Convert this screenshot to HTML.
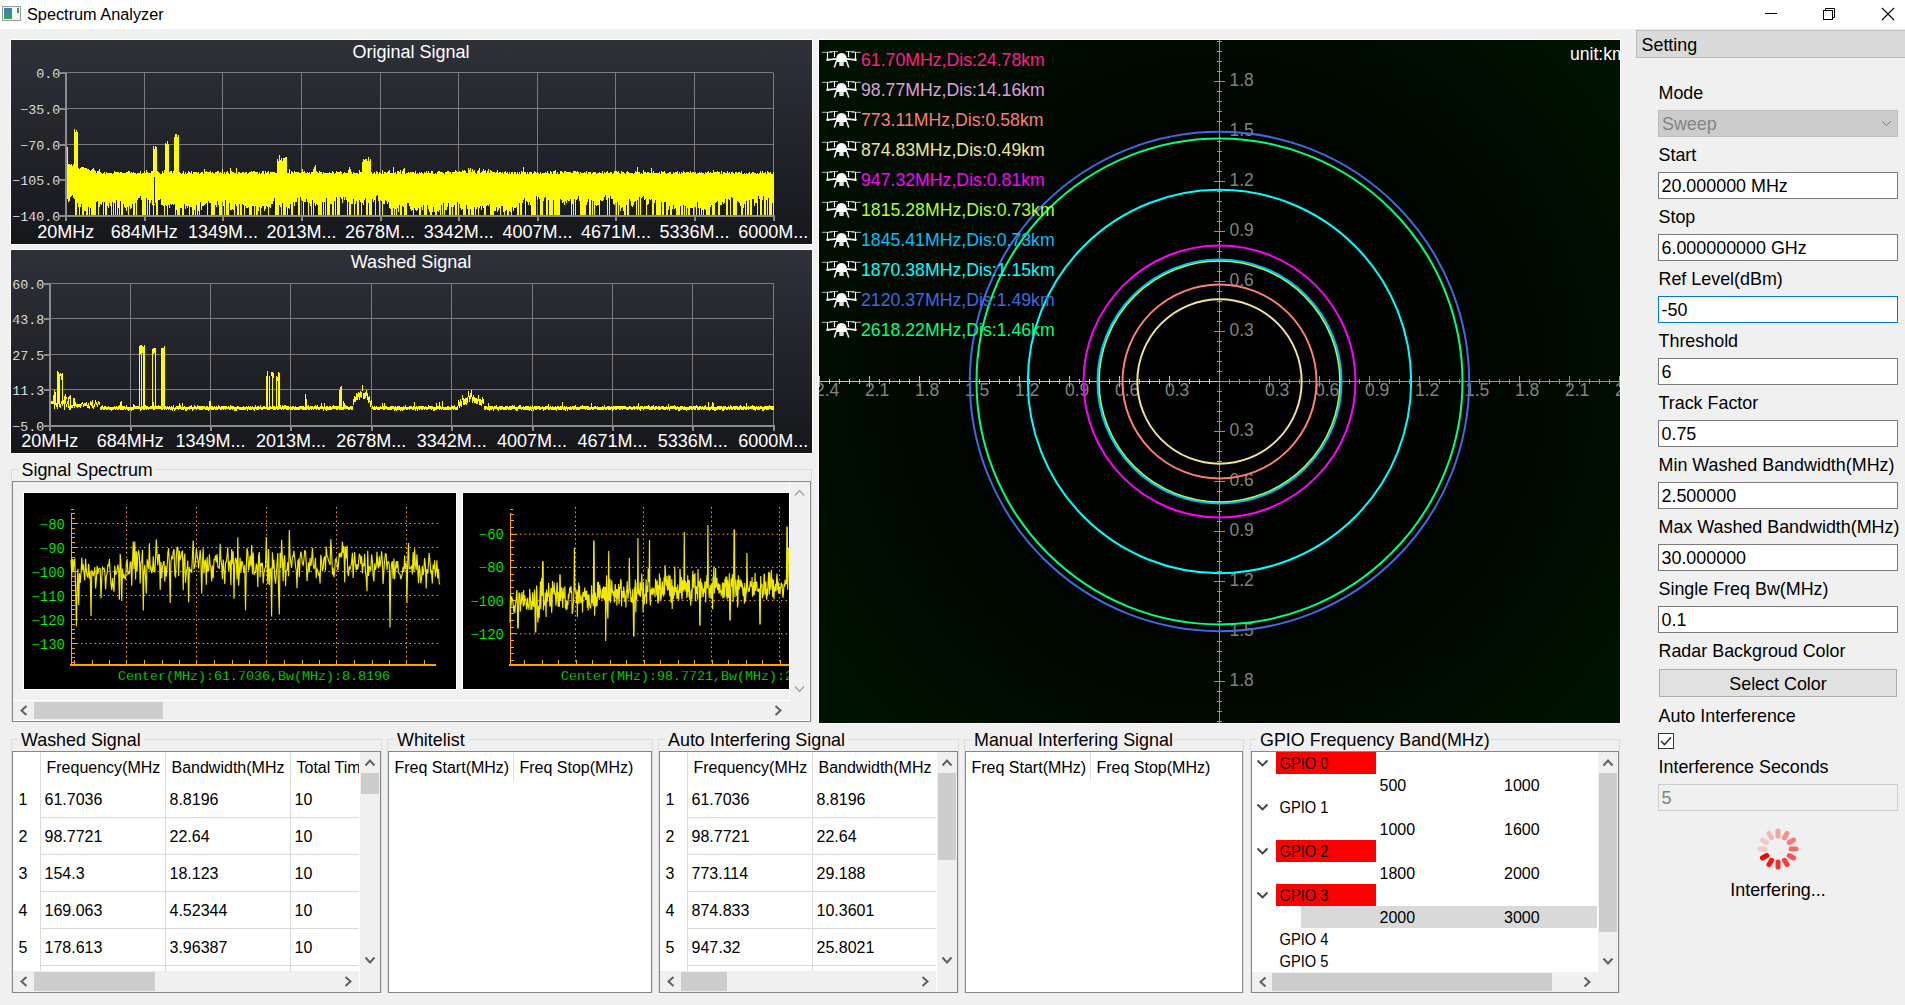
<!DOCTYPE html>
<html><head><meta charset="utf-8"><title>Spectrum Analyzer</title>
<style>html,body{margin:0;padding:0;width:1905px;height:1005px;overflow:hidden;background:#f0f0f0;font-family:"Liberation Sans",sans-serif;}
svg text{white-space:pre}</style></head>
<body><svg width="1905" height="1005" viewBox="0 0 1905 1005" style="position:absolute;left:0;top:0;display:block"><defs><linearGradient id="chg" x1="0" y1="0" x2="0" y2="1"><stop offset="0" stop-color="#2f3139"/><stop offset="1" stop-color="#16171b"/></linearGradient><radialGradient id="rdg" cx="1219.5" cy="381.5" r="480" gradientUnits="userSpaceOnUse"><stop offset="0" stop-color="#000000"/><stop offset="0.45" stop-color="#000300"/><stop offset="1" stop-color="#001200"/></radialGradient><symbol id="drone" viewBox="0 0 40 20" overflow="visible">
<g fill="none" stroke="#b8ccd4" stroke-width="0.9">
<line x1="0" y1="2.3" x2="10.5" y2="2.3"/><line x1="7.5" y1="1.5" x2="16" y2="1.5"/>
<line x1="24" y1="1.5" x2="32.5" y2="1.5"/><line x1="29.5" y1="2.3" x2="39" y2="2.3"/>
</g>
<g fill="none" stroke="#f4f8f8" stroke-width="1.1">
<line x1="5.5" y1="2" x2="5.5" y2="9.5"/><line x1="12.5" y1="1" x2="12.5" y2="7"/>
<line x1="26.5" y1="1" x2="26.5" y2="7"/><line x1="33.5" y1="2" x2="33.5" y2="9.5"/>
<path d="M5.5 9.8 Q10 9.3 14.5 8.8" stroke-width="1.7"/><path d="M33.5 9.8 Q29 9.3 24.5 8.8" stroke-width="1.7"/>
<path d="M14.5 11 L12.3 17.5" stroke-width="1.5"/><path d="M24.5 11 L26.7 17.5" stroke-width="1.5"/>
</g>
<path d="M14 10.5 Q14 3 19.5 3 Q25 3 25 10.5 L24 12 L15 12 Z" fill="#ffffff"/>
<rect x="4.3" y="8.5" width="2.6" height="2.6" rx="1" fill="#fff"/><rect x="32.1" y="8.5" width="2.6" height="2.6" rx="1" fill="#fff"/>
<rect x="17.3" y="12" width="4.4" height="4" fill="#d8e4e4"/>
</symbol></defs><rect x="0" y="0" width="1905" height="29" fill="#ffffff" />
<rect x="2" y="6" width="19" height="15" fill="#f4f4f4" />
<rect x="2" y="6" width="19" height="1" fill="#9a9a9a" />
<rect x="2" y="20" width="19" height="1" fill="#9a9a9a" />
<rect x="2" y="6" width="1" height="15" fill="#9a9a9a" />
<rect x="20" y="6" width="1" height="15" fill="#9a9a9a" />
<defs><linearGradient id="icg" x1="0" y1="0" x2="0" y2="1"><stop offset="0" stop-color="#3b7fb0"/><stop offset="1" stop-color="#3aa060"/></linearGradient></defs>
<rect x="4" y="8" width="8" height="11" fill="url(#icg)" />
<rect x="17" y="8" width="2" height="5" fill="#3aa060" />
<text x="27" y="20" font-family="Liberation Sans" font-size="16.3" fill="#000" text-anchor="start" >Spectrum Analyzer</text>
<rect x="1765" y="13" width="12" height="1" fill="#000" />
<path d="M1825.5 10.5 V8.5 H1834.5 V17.5 H1832.5" fill="none" stroke="#000" stroke-width="1"/>
<rect x="1823.5" y="10.5" width="9" height="9" fill="none" stroke="#000" stroke-width="1"/>
<line x1="1882" y1="8" x2="1894" y2="20" stroke="#000" stroke-width="1.1" />
<line x1="1894" y1="8" x2="1882" y2="20" stroke="#000" stroke-width="1.1" />
<rect x="10" y="39" width="803" height="206" fill="#ffffff" />
<rect x="11" y="40" width="801" height="204" fill="url(#chg)" />
<text x="411" y="57.5" font-family="Liberation Sans" font-size="18" fill="#ffffff" text-anchor="middle" >Original Signal</text>
<rect x="65.7" y="72" width="707.5" height="1" fill="#7c7c7c" />
<text x="60.2" y="78" font-family="Liberation Mono" font-size="13.33" fill="#ffffff" text-anchor="end" stroke="#24262e" stroke-width="0.2">0.0</text>
<rect x="59.7" y="72" width="6" height="2" fill="#8a8a8a" />
<rect x="65.7" y="108" width="707.5" height="1" fill="#7c7c7c" />
<text x="60.2" y="114" font-family="Liberation Mono" font-size="13.33" fill="#ffffff" text-anchor="end" stroke="#24262e" stroke-width="0.2">−35.0</text>
<rect x="59.7" y="108" width="6" height="2" fill="#8a8a8a" />
<rect x="65.7" y="144" width="707.5" height="1" fill="#7c7c7c" />
<text x="60.2" y="150" font-family="Liberation Mono" font-size="13.33" fill="#ffffff" text-anchor="end" stroke="#24262e" stroke-width="0.2">−70.0</text>
<rect x="59.7" y="144" width="6" height="2" fill="#8a8a8a" />
<rect x="65.7" y="179" width="707.5" height="1" fill="#7c7c7c" />
<text x="60.2" y="185" font-family="Liberation Mono" font-size="13.33" fill="#ffffff" text-anchor="end" stroke="#24262e" stroke-width="0.2">−105.0</text>
<rect x="59.7" y="179" width="6" height="2" fill="#8a8a8a" />
<text x="60.2" y="221" font-family="Liberation Mono" font-size="13.33" fill="#ffffff" text-anchor="end" stroke="#24262e" stroke-width="0.2">−140.0</text>
<rect x="59.7" y="215" width="6" height="2" fill="#8a8a8a" />
<rect x="65" y="73" width="1" height="142.5" fill="#7c7c7c" />
<rect x="65" y="215" width="2" height="6" fill="#8a8a8a" />
<rect x="144" y="73" width="1" height="142.5" fill="#7c7c7c" />
<rect x="144" y="215" width="2" height="6" fill="#8a8a8a" />
<rect x="222" y="73" width="1" height="142.5" fill="#7c7c7c" />
<rect x="222" y="215" width="2" height="6" fill="#8a8a8a" />
<rect x="301" y="73" width="1" height="142.5" fill="#7c7c7c" />
<rect x="301" y="215" width="2" height="6" fill="#8a8a8a" />
<rect x="380" y="73" width="1" height="142.5" fill="#7c7c7c" />
<rect x="380" y="215" width="2" height="6" fill="#8a8a8a" />
<rect x="458" y="73" width="1" height="142.5" fill="#7c7c7c" />
<rect x="458" y="215" width="2" height="6" fill="#8a8a8a" />
<rect x="537" y="73" width="1" height="142.5" fill="#7c7c7c" />
<rect x="537" y="215" width="2" height="6" fill="#8a8a8a" />
<rect x="615" y="73" width="1" height="142.5" fill="#7c7c7c" />
<rect x="615" y="215" width="2" height="6" fill="#8a8a8a" />
<rect x="694" y="73" width="1" height="142.5" fill="#7c7c7c" />
<rect x="694" y="215" width="2" height="6" fill="#8a8a8a" />
<rect x="773" y="73" width="1" height="142.5" fill="#7c7c7c" />
<rect x="773" y="215" width="2" height="6" fill="#8a8a8a" />
<clipPath id="c1"><rect x="65.7" y="33" width="709.5" height="182.5"/></clipPath>
<path clip-path="url(#c1)" d="M66 147h1V216h-1ZM67 147h1V199h-1ZM68 164h1V202h-1ZM69 164h1V201h-1ZM70 165h1V197h-1ZM71 164h1V196h-1ZM72 166h1V195h-1ZM73 164h1V198h-1ZM74 129h1V199h-1ZM75 132h1V216h-1ZM76 130h1V216h-1ZM77 132h1V203h-1ZM78 168h1V207h-1ZM79 169h1V216h-1ZM80 168h1V207h-1ZM81 167h1V204h-1ZM82 167h1V216h-1ZM83 167h1V216h-1ZM84 168h1V211h-1ZM85 168h1V211h-1ZM86 168h1V216h-1ZM87 169h1V216h-1ZM88 169h1V207h-1ZM89 170h1V216h-1ZM90 171h1V208h-1ZM91 170h1V216h-1ZM92 169h1V216h-1ZM93 168h1V216h-1ZM94 170h1V216h-1ZM95 171h1V216h-1ZM96 173h1V202h-1ZM97 171h1V201h-1ZM98 171h1V216h-1ZM99 169h1V207h-1ZM100 172h1V204h-1ZM101 173h1V205h-1ZM102 174h1V202h-1ZM103 173h1V216h-1ZM104 172h1V202h-1ZM105 174h1V216h-1ZM106 172h1V216h-1ZM107 173h1V206h-1ZM108 173h1V208h-1ZM109 173h1V203h-1ZM110 173h1V206h-1ZM111 173h1V216h-1ZM112 174h1V202h-1ZM113 173h1V216h-1ZM114 171h1V203h-1ZM115 172h1V216h-1ZM116 172h1V200h-1ZM117 172h1V216h-1ZM118 172h1V208h-1ZM119 173h1V216h-1ZM120 172h1V201h-1ZM121 172h1V216h-1ZM122 173h1V216h-1ZM123 173h1V204h-1ZM124 173h1V207h-1ZM125 173h1V208h-1ZM126 172h1V211h-1ZM127 172h1V207h-1ZM128 171h1V216h-1ZM129 171h1V206h-1ZM130 173h1V209h-1ZM131 172h1V208h-1ZM132 173h1V204h-1ZM133 172h1V216h-1ZM134 173h1V216h-1ZM135 173h1V203h-1ZM136 174h1V216h-1ZM137 173h1V200h-1ZM138 173h1V198h-1ZM139 173h1V198h-1ZM140 171h1V196h-1ZM141 174h1V200h-1ZM142 173h1V216h-1ZM143 173h1V216h-1ZM144 171h1V216h-1ZM145 173h1V216h-1ZM146 170h1V198h-1ZM147 172h1V216h-1ZM148 173h1V200h-1ZM149 173h1V216h-1ZM150 173h1V203h-1ZM151 171h1V200h-1ZM152 171h1V205h-1ZM153 146h1V216h-1ZM154 149h1V205h-1ZM155 146h1V203h-1ZM156 147h1V216h-1ZM157 171h1V216h-1ZM158 172h1V200h-1ZM159 173h1V200h-1ZM160 174h1V199h-1ZM161 174h1V205h-1ZM162 171h1V205h-1ZM163 173h1V206h-1ZM164 170h1V216h-1ZM165 143h1V205h-1ZM166 144h1V206h-1ZM167 141h1V216h-1ZM168 144h1V205h-1ZM169 172h1V208h-1ZM170 171h1V204h-1ZM171 171h1V205h-1ZM172 173h1V204h-1ZM173 171h1V205h-1ZM174 137h1V204h-1ZM175 134h1V216h-1ZM176 134h1V210h-1ZM177 137h1V216h-1ZM178 135h1V216h-1ZM179 172h1V216h-1ZM180 173h1V208h-1ZM181 174h1V208h-1ZM182 173h1V216h-1ZM183 171h1V216h-1ZM184 174h1V204h-1ZM185 172h1V209h-1ZM186 174h1V206h-1ZM187 173h1V208h-1ZM188 171h1V206h-1ZM189 172h1V216h-1ZM190 173h1V207h-1ZM191 171h1V207h-1ZM192 174h1V216h-1ZM193 172h1V216h-1ZM194 172h1V210h-1ZM195 172h1V216h-1ZM196 172h1V205h-1ZM197 173h1V216h-1ZM198 172h1V211h-1ZM199 174h1V216h-1ZM200 173h1V202h-1ZM201 172h1V210h-1ZM202 172h1V206h-1ZM203 174h1V206h-1ZM204 169h1V205h-1ZM205 172h1V204h-1ZM206 171h1V203h-1ZM207 172h1V216h-1ZM208 172h1V201h-1ZM209 172h1V203h-1ZM210 171h1V203h-1ZM211 173h1V216h-1ZM212 172h1V216h-1ZM213 173h1V216h-1ZM214 174h1V216h-1ZM215 172h1V205h-1ZM216 172h1V207h-1ZM217 171h1V201h-1ZM218 171h1V205h-1ZM219 173h1V216h-1ZM220 172h1V216h-1ZM221 173h1V216h-1ZM222 169h1V202h-1ZM223 174h1V206h-1ZM224 172h1V216h-1ZM225 174h1V200h-1ZM226 172h1V216h-1ZM227 171h1V216h-1ZM228 173h1V216h-1ZM229 174h1V203h-1ZM230 168h1V210h-1ZM231 171h1V210h-1ZM232 172h1V209h-1ZM233 172h1V210h-1ZM234 173h1V216h-1ZM235 173h1V204h-1ZM236 168h1V206h-1ZM237 174h1V216h-1ZM238 172h1V216h-1ZM239 172h1V204h-1ZM240 173h1V216h-1ZM241 173h1V216h-1ZM242 172h1V204h-1ZM243 172h1V205h-1ZM244 173h1V216h-1ZM245 172h1V206h-1ZM246 172h1V208h-1ZM247 174h1V208h-1ZM248 173h1V207h-1ZM249 172h1V216h-1ZM250 172h1V216h-1ZM251 171h1V216h-1ZM252 172h1V206h-1ZM253 171h1V206h-1ZM254 171h1V216h-1ZM255 172h1V206h-1ZM256 172h1V216h-1ZM257 172h1V216h-1ZM258 174h1V211h-1ZM259 172h1V207h-1ZM260 174h1V216h-1ZM261 173h1V208h-1ZM262 171h1V206h-1ZM263 171h1V206h-1ZM264 174h1V211h-1ZM265 171h1V209h-1ZM266 173h1V206h-1ZM267 172h1V207h-1ZM268 171h1V216h-1ZM269 174h1V207h-1ZM270 172h1V208h-1ZM271 172h1V204h-1ZM272 172h1V204h-1ZM273 172h1V201h-1ZM274 172h1V198h-1ZM275 173h1V216h-1ZM276 173h1V216h-1ZM277 159h1V216h-1ZM278 161h1V216h-1ZM279 155h1V205h-1ZM280 160h1V207h-1ZM281 158h1V216h-1ZM282 161h1V203h-1ZM283 158h1V216h-1ZM284 158h1V216h-1ZM285 157h1V216h-1ZM286 157h1V207h-1ZM287 173h1V216h-1ZM288 173h1V208h-1ZM289 169h1V209h-1ZM290 174h1V204h-1ZM291 171h1V216h-1ZM292 172h1V216h-1ZM293 173h1V202h-1ZM294 171h1V206h-1ZM295 172h1V202h-1ZM296 172h1V202h-1ZM297 172h1V198h-1ZM298 172h1V216h-1ZM299 173h1V216h-1ZM300 173h1V197h-1ZM301 172h1V200h-1ZM302 169h1V201h-1ZM303 172h1V216h-1ZM304 171h1V202h-1ZM305 173h1V202h-1ZM306 173h1V199h-1ZM307 172h1V202h-1ZM308 173h1V216h-1ZM309 172h1V203h-1ZM310 174h1V206h-1ZM311 172h1V216h-1ZM312 172h1V200h-1ZM313 169h1V216h-1ZM314 167h1V203h-1ZM315 165h1V206h-1ZM316 171h1V204h-1ZM317 172h1V205h-1ZM318 173h1V216h-1ZM319 171h1V216h-1ZM320 172h1V216h-1ZM321 172h1V216h-1ZM322 174h1V202h-1ZM323 172h1V216h-1ZM324 173h1V202h-1ZM325 173h1V216h-1ZM326 173h1V198h-1ZM327 173h1V216h-1ZM328 173h1V216h-1ZM329 172h1V216h-1ZM330 173h1V204h-1ZM331 173h1V204h-1ZM332 171h1V216h-1ZM333 172h1V216h-1ZM334 174h1V201h-1ZM335 173h1V216h-1ZM336 171h1V197h-1ZM337 172h1V216h-1ZM338 172h1V216h-1ZM339 172h1V216h-1ZM340 171h1V197h-1ZM341 172h1V199h-1ZM342 174h1V203h-1ZM343 173h1V197h-1ZM344 172h1V200h-1ZM345 173h1V197h-1ZM346 173h1V200h-1ZM347 173h1V216h-1ZM348 170h1V202h-1ZM349 167h1V216h-1ZM350 169h1V216h-1ZM351 172h1V204h-1ZM352 174h1V204h-1ZM353 172h1V199h-1ZM354 173h1V216h-1ZM355 173h1V204h-1ZM356 173h1V201h-1ZM357 173h1V216h-1ZM358 174h1V216h-1ZM359 170h1V200h-1ZM360 172h1V202h-1ZM361 172h1V216h-1ZM362 162h1V203h-1ZM363 159h1V205h-1ZM364 160h1V200h-1ZM365 159h1V198h-1ZM366 159h1V216h-1ZM367 161h1V216h-1ZM368 157h1V203h-1ZM369 161h1V216h-1ZM370 159h1V216h-1ZM371 172h1V216h-1ZM372 174h1V199h-1ZM373 173h1V202h-1ZM374 172h1V200h-1ZM375 174h1V216h-1ZM376 171h1V196h-1ZM377 172h1V195h-1ZM378 174h1V201h-1ZM379 172h1V216h-1ZM380 173h1V200h-1ZM381 174h1V201h-1ZM382 170h1V216h-1ZM383 174h1V204h-1ZM384 172h1V204h-1ZM385 172h1V200h-1ZM386 173h1V201h-1ZM387 172h1V204h-1ZM388 171h1V202h-1ZM389 170h1V208h-1ZM390 173h1V209h-1ZM391 173h1V216h-1ZM392 173h1V216h-1ZM393 167h1V208h-1ZM394 173h1V216h-1ZM395 172h1V209h-1ZM396 174h1V216h-1ZM397 171h1V208h-1ZM398 171h1V212h-1ZM399 172h1V205h-1ZM400 170h1V216h-1ZM401 174h1V216h-1ZM402 171h1V206h-1ZM403 169h1V207h-1ZM404 168h1V216h-1ZM405 174h1V216h-1ZM406 173h1V216h-1ZM407 173h1V203h-1ZM408 172h1V203h-1ZM409 173h1V206h-1ZM410 172h1V209h-1ZM411 172h1V211h-1ZM412 172h1V210h-1ZM413 172h1V216h-1ZM414 173h1V208h-1ZM415 171h1V210h-1ZM416 174h1V211h-1ZM417 173h1V210h-1ZM418 174h1V208h-1ZM419 172h1V216h-1ZM420 173h1V216h-1ZM421 172h1V207h-1ZM422 173h1V210h-1ZM423 174h1V205h-1ZM424 172h1V216h-1ZM425 173h1V216h-1ZM426 171h1V216h-1ZM427 173h1V205h-1ZM428 171h1V209h-1ZM429 173h1V212h-1ZM430 173h1V216h-1ZM431 171h1V216h-1ZM432 171h1V212h-1ZM433 174h1V207h-1ZM434 174h1V212h-1ZM435 173h1V216h-1ZM436 174h1V216h-1ZM437 172h1V211h-1ZM438 171h1V212h-1ZM439 171h1V210h-1ZM440 172h1V216h-1ZM441 172h1V205h-1ZM442 172h1V216h-1ZM443 173h1V203h-1ZM444 174h1V216h-1ZM445 172h1V210h-1ZM446 172h1V210h-1ZM447 171h1V207h-1ZM448 171h1V203h-1ZM449 172h1V216h-1ZM450 172h1V216h-1ZM451 174h1V207h-1ZM452 172h1V216h-1ZM453 172h1V207h-1ZM454 172h1V205h-1ZM455 170h1V216h-1ZM456 171h1V216h-1ZM457 172h1V202h-1ZM458 172h1V216h-1ZM459 171h1V204h-1ZM460 172h1V208h-1ZM461 172h1V210h-1ZM462 170h1V209h-1ZM463 171h1V216h-1ZM464 170h1V216h-1ZM465 171h1V216h-1ZM466 173h1V205h-1ZM467 173h1V209h-1ZM468 168h1V216h-1ZM469 170h1V216h-1ZM470 168h1V209h-1ZM471 172h1V216h-1ZM472 169h1V216h-1ZM473 171h1V216h-1ZM474 170h1V207h-1ZM475 173h1V216h-1ZM476 174h1V209h-1ZM477 171h1V207h-1ZM478 170h1V216h-1ZM479 168h1V208h-1ZM480 173h1V206h-1ZM481 172h1V210h-1ZM482 171h1V206h-1ZM483 169h1V208h-1ZM484 171h1V216h-1ZM485 170h1V216h-1ZM486 173h1V206h-1ZM487 171h1V205h-1ZM488 169h1V206h-1ZM489 173h1V204h-1ZM490 170h1V216h-1ZM491 171h1V216h-1ZM492 172h1V216h-1ZM493 172h1V216h-1ZM494 172h1V211h-1ZM495 173h1V211h-1ZM496 172h1V207h-1ZM497 170h1V212h-1ZM498 173h1V210h-1ZM499 172h1V208h-1ZM500 172h1V216h-1ZM501 173h1V206h-1ZM502 172h1V206h-1ZM503 174h1V212h-1ZM504 172h1V216h-1ZM505 171h1V211h-1ZM506 173h1V210h-1ZM507 172h1V216h-1ZM508 174h1V216h-1ZM509 172h1V211h-1ZM510 174h1V212h-1ZM511 172h1V216h-1ZM512 172h1V207h-1ZM513 174h1V211h-1ZM514 172h1V208h-1ZM515 172h1V208h-1ZM516 174h1V207h-1ZM517 172h1V216h-1ZM518 174h1V216h-1ZM519 172h1V203h-1ZM520 174h1V216h-1ZM521 171h1V216h-1ZM522 172h1V203h-1ZM523 167h1V200h-1ZM524 172h1V198h-1ZM525 172h1V216h-1ZM526 174h1V201h-1ZM527 172h1V202h-1ZM528 174h1V205h-1ZM529 172h1V202h-1ZM530 172h1V205h-1ZM531 172h1V216h-1ZM532 174h1V216h-1ZM533 173h1V216h-1ZM534 171h1V216h-1ZM535 172h1V216h-1ZM536 173h1V196h-1ZM537 172h1V200h-1ZM538 173h1V197h-1ZM539 174h1V199h-1ZM540 172h1V216h-1ZM541 174h1V216h-1ZM542 173h1V216h-1ZM543 173h1V201h-1ZM544 173h1V198h-1ZM545 172h1V197h-1ZM546 173h1V216h-1ZM547 171h1V216h-1ZM548 173h1V200h-1ZM549 174h1V216h-1ZM550 171h1V216h-1ZM551 172h1V216h-1ZM552 174h1V216h-1ZM553 171h1V200h-1ZM554 171h1V216h-1ZM555 170h1V216h-1ZM556 174h1V216h-1ZM557 172h1V216h-1ZM558 174h1V216h-1ZM559 174h1V216h-1ZM560 171h1V199h-1ZM561 171h1V200h-1ZM562 172h1V203h-1ZM563 173h1V202h-1ZM564 171h1V205h-1ZM565 171h1V201h-1ZM566 172h1V203h-1ZM567 172h1V200h-1ZM568 172h1V201h-1ZM569 172h1V201h-1ZM570 172h1V199h-1ZM571 173h1V216h-1ZM572 173h1V204h-1ZM573 171h1V216h-1ZM574 171h1V199h-1ZM575 171h1V216h-1ZM576 172h1V200h-1ZM577 171h1V199h-1ZM578 172h1V196h-1ZM579 174h1V201h-1ZM580 172h1V216h-1ZM581 173h1V216h-1ZM582 173h1V216h-1ZM583 173h1V216h-1ZM584 172h1V216h-1ZM585 173h1V216h-1ZM586 171h1V205h-1ZM587 174h1V202h-1ZM588 172h1V199h-1ZM589 172h1V216h-1ZM590 172h1V216h-1ZM591 174h1V200h-1ZM592 173h1V216h-1ZM593 172h1V201h-1ZM594 172h1V216h-1ZM595 172h1V205h-1ZM596 174h1V206h-1ZM597 173h1V205h-1ZM598 173h1V205h-1ZM599 172h1V216h-1ZM600 173h1V200h-1ZM601 173h1V201h-1ZM602 171h1V201h-1ZM603 174h1V200h-1ZM604 172h1V197h-1ZM605 173h1V195h-1ZM606 172h1V200h-1ZM607 171h1V216h-1ZM608 173h1V198h-1ZM609 173h1V216h-1ZM610 172h1V196h-1ZM611 172h1V199h-1ZM612 174h1V199h-1ZM613 173h1V204h-1ZM614 171h1V205h-1ZM615 171h1V203h-1ZM616 171h1V216h-1ZM617 172h1V202h-1ZM618 171h1V216h-1ZM619 173h1V205h-1ZM620 174h1V211h-1ZM621 171h1V208h-1ZM622 172h1V207h-1ZM623 172h1V211h-1ZM624 173h1V216h-1ZM625 174h1V216h-1ZM626 172h1V205h-1ZM627 171h1V216h-1ZM628 172h1V216h-1ZM629 173h1V199h-1ZM630 173h1V201h-1ZM631 173h1V206h-1ZM632 173h1V207h-1ZM633 174h1V205h-1ZM634 173h1V202h-1ZM635 171h1V201h-1ZM636 172h1V216h-1ZM637 167h1V200h-1ZM638 172h1V216h-1ZM639 172h1V197h-1ZM640 174h1V216h-1ZM641 173h1V198h-1ZM642 174h1V197h-1ZM643 170h1V196h-1ZM644 172h1V200h-1ZM645 172h1V199h-1ZM646 173h1V216h-1ZM647 172h1V205h-1ZM648 172h1V204h-1ZM649 173h1V199h-1ZM650 173h1V200h-1ZM651 168h1V199h-1ZM652 173h1V216h-1ZM653 171h1V216h-1ZM654 173h1V203h-1ZM655 173h1V200h-1ZM656 173h1V216h-1ZM657 173h1V216h-1ZM658 173h1V216h-1ZM659 172h1V216h-1ZM660 174h1V216h-1ZM661 171h1V202h-1ZM662 172h1V216h-1ZM663 172h1V216h-1ZM664 171h1V202h-1ZM665 173h1V202h-1ZM666 174h1V216h-1ZM667 173h1V216h-1ZM668 173h1V210h-1ZM669 172h1V206h-1ZM670 172h1V216h-1ZM671 174h1V216h-1ZM672 174h1V209h-1ZM673 172h1V205h-1ZM674 173h1V209h-1ZM675 172h1V208h-1ZM676 172h1V216h-1ZM677 171h1V216h-1ZM678 174h1V216h-1ZM679 172h1V216h-1ZM680 174h1V206h-1ZM681 172h1V216h-1ZM682 173h1V216h-1ZM683 171h1V205h-1ZM684 172h1V216h-1ZM685 173h1V206h-1ZM686 172h1V216h-1ZM687 172h1V208h-1ZM688 172h1V216h-1ZM689 173h1V216h-1ZM690 171h1V208h-1ZM691 173h1V208h-1ZM692 172h1V208h-1ZM693 172h1V216h-1ZM694 173h1V207h-1ZM695 172h1V207h-1ZM696 174h1V216h-1ZM697 173h1V202h-1ZM698 173h1V208h-1ZM699 172h1V216h-1ZM700 173h1V208h-1ZM701 172h1V216h-1ZM702 173h1V210h-1ZM703 173h1V216h-1ZM704 174h1V209h-1ZM705 172h1V210h-1ZM706 173h1V216h-1ZM707 172h1V216h-1ZM708 171h1V216h-1ZM709 173h1V216h-1ZM710 172h1V207h-1ZM711 173h1V205h-1ZM712 173h1V216h-1ZM713 170h1V216h-1ZM714 172h1V216h-1ZM715 172h1V203h-1ZM716 172h1V202h-1ZM717 171h1V201h-1ZM718 172h1V216h-1ZM719 172h1V216h-1ZM720 174h1V205h-1ZM721 171h1V205h-1ZM722 174h1V202h-1ZM723 172h1V204h-1ZM724 172h1V203h-1ZM725 173h1V199h-1ZM726 173h1V216h-1ZM727 171h1V216h-1ZM728 173h1V199h-1ZM729 172h1V200h-1ZM730 174h1V216h-1ZM731 172h1V197h-1ZM732 172h1V198h-1ZM733 173h1V216h-1ZM734 174h1V216h-1ZM735 172h1V216h-1ZM736 172h1V216h-1ZM737 173h1V201h-1ZM738 172h1V202h-1ZM739 172h1V203h-1ZM740 173h1V206h-1ZM741 171h1V216h-1ZM742 174h1V216h-1ZM743 174h1V208h-1ZM744 173h1V204h-1ZM745 174h1V216h-1ZM746 173h1V201h-1ZM747 174h1V216h-1ZM748 173h1V216h-1ZM749 172h1V200h-1ZM750 174h1V216h-1ZM751 173h1V216h-1ZM752 172h1V199h-1ZM753 172h1V199h-1ZM754 173h1V206h-1ZM755 173h1V203h-1ZM756 174h1V203h-1ZM757 173h1V216h-1ZM758 174h1V196h-1ZM759 173h1V199h-1ZM760 171h1V216h-1ZM761 173h1V216h-1ZM762 171h1V200h-1ZM763 173h1V196h-1ZM764 173h1V216h-1ZM765 172h1V216h-1ZM766 174h1V200h-1ZM767 171h1V216h-1ZM768 172h1V198h-1ZM769 173h1V216h-1ZM770 172h1V216h-1ZM771 174h1V216h-1ZM772 174h1V203h-1ZM773 172h1V216h-1Z" fill="#ffff00" shape-rendering="crispEdges"/>
<rect x="154" y="177" width="1" height="27" fill="#202229" />
<rect x="65" y="73" width="2" height="144" fill="#8c8c8c" />
<rect x="65" y="215" width="710" height="2" fill="#8c8c8c" />
<text x="65.7" y="237.5" font-family="Liberation Sans" font-size="18" fill="#ffffff" text-anchor="middle" >20MHz</text>
<text x="144.3" y="237.5" font-family="Liberation Sans" font-size="18" fill="#ffffff" text-anchor="middle" >684MHz</text>
<text x="222.9" y="237.5" font-family="Liberation Sans" font-size="18" fill="#ffffff" text-anchor="middle" >1349M...</text>
<text x="301.5" y="237.5" font-family="Liberation Sans" font-size="18" fill="#ffffff" text-anchor="middle" >2013M...</text>
<text x="380.1" y="237.5" font-family="Liberation Sans" font-size="18" fill="#ffffff" text-anchor="middle" >2678M...</text>
<text x="458.8" y="237.5" font-family="Liberation Sans" font-size="18" fill="#ffffff" text-anchor="middle" >3342M...</text>
<text x="537.4" y="237.5" font-family="Liberation Sans" font-size="18" fill="#ffffff" text-anchor="middle" >4007M...</text>
<text x="616.0" y="237.5" font-family="Liberation Sans" font-size="18" fill="#ffffff" text-anchor="middle" >4671M...</text>
<text x="694.6" y="237.5" font-family="Liberation Sans" font-size="18" fill="#ffffff" text-anchor="middle" >5336M...</text>
<text x="773.2" y="237.5" font-family="Liberation Sans" font-size="18" fill="#ffffff" text-anchor="middle" >6000M...</text>
<rect x="10" y="249" width="803" height="205" fill="#ffffff" />
<rect x="11" y="250" width="801" height="203" fill="url(#chg)" />
<text x="411" y="267.5" font-family="Liberation Sans" font-size="18" fill="#ffffff" text-anchor="middle" >Washed Signal</text>
<rect x="49.8" y="283" width="723.4000000000001" height="1" fill="#7c7c7c" />
<text x="44.3" y="289" font-family="Liberation Mono" font-size="13.33" fill="#ffffff" text-anchor="end" stroke="#24262e" stroke-width="0.2">60.0</text>
<rect x="43.8" y="283" width="6" height="2" fill="#8a8a8a" />
<rect x="49.8" y="318" width="723.4000000000001" height="1" fill="#7c7c7c" />
<text x="44.3" y="324" font-family="Liberation Mono" font-size="13.33" fill="#ffffff" text-anchor="end" stroke="#24262e" stroke-width="0.2">43.8</text>
<rect x="43.8" y="318" width="6" height="2" fill="#8a8a8a" />
<rect x="49.8" y="354" width="723.4000000000001" height="1" fill="#7c7c7c" />
<text x="44.3" y="360" font-family="Liberation Mono" font-size="13.33" fill="#ffffff" text-anchor="end" stroke="#24262e" stroke-width="0.2">27.5</text>
<rect x="43.8" y="354" width="6" height="2" fill="#8a8a8a" />
<rect x="49.8" y="389" width="723.4000000000001" height="1" fill="#7c7c7c" />
<text x="44.3" y="395" font-family="Liberation Mono" font-size="13.33" fill="#ffffff" text-anchor="end" stroke="#24262e" stroke-width="0.2">11.3</text>
<rect x="43.8" y="389" width="6" height="2" fill="#8a8a8a" />
<text x="44.3" y="431" font-family="Liberation Mono" font-size="13.33" fill="#ffffff" text-anchor="end" stroke="#24262e" stroke-width="0.2">−5.0</text>
<rect x="43.8" y="425" width="6" height="2" fill="#8a8a8a" />
<rect x="49" y="283.1" width="1" height="142.2" fill="#7c7c7c" />
<rect x="49" y="425" width="2" height="6" fill="#8a8a8a" />
<rect x="130" y="283.1" width="1" height="142.2" fill="#7c7c7c" />
<rect x="130" y="425" width="2" height="6" fill="#8a8a8a" />
<rect x="210" y="283.1" width="1" height="142.2" fill="#7c7c7c" />
<rect x="210" y="425" width="2" height="6" fill="#8a8a8a" />
<rect x="290" y="283.1" width="1" height="142.2" fill="#7c7c7c" />
<rect x="290" y="425" width="2" height="6" fill="#8a8a8a" />
<rect x="371" y="283.1" width="1" height="142.2" fill="#7c7c7c" />
<rect x="371" y="425" width="2" height="6" fill="#8a8a8a" />
<rect x="451" y="283.1" width="1" height="142.2" fill="#7c7c7c" />
<rect x="451" y="425" width="2" height="6" fill="#8a8a8a" />
<rect x="532" y="283.1" width="1" height="142.2" fill="#7c7c7c" />
<rect x="532" y="425" width="2" height="6" fill="#8a8a8a" />
<rect x="612" y="283.1" width="1" height="142.2" fill="#7c7c7c" />
<rect x="612" y="425" width="2" height="6" fill="#8a8a8a" />
<rect x="692" y="283.1" width="1" height="142.2" fill="#7c7c7c" />
<rect x="692" y="425" width="2" height="6" fill="#8a8a8a" />
<rect x="773" y="283.1" width="1" height="142.2" fill="#7c7c7c" />
<rect x="773" y="425" width="2" height="6" fill="#8a8a8a" />
<clipPath id="c2"><rect x="49.8" y="243.10000000000002" width="725.4000000000001" height="182.2"/></clipPath>
<path clip-path="url(#c2)" d="M50 404h1V409h-1ZM51 401h1V404h-1ZM52 401h1V404h-1ZM53 395h1V404h-1ZM54 390h1V409h-1ZM55 392h1V405h-1ZM56 403h1V407h-1ZM57 371h1V409h-1ZM58 372h1V404h-1ZM59 374h1V407h-1ZM60 373h1v3h-1ZM60 404h1V408h-1ZM61 374h1v6h-1ZM61 401h1V404h-1ZM62 373h1V406h-1ZM63 400h1V404h-1ZM64 396h1V410h-1ZM65 394h1V404h-1ZM66 397h1v2h-1ZM66 404h1V407h-1ZM67 401h1V404h-1ZM68 397h1v8h-1ZM68 405h1V408h-1ZM69 396h1v3h-1ZM69 406h1V410h-1ZM70 395h1V410h-1ZM71 405h1V408h-1ZM72 405h1V408h-1ZM73 398h1V406h-1ZM74 398h1v6h-1ZM74 404h1V408h-1ZM75 402h1V406h-1ZM76 404h1V407h-1ZM77 404h1V408h-1ZM78 404h1V407h-1ZM79 404h1V407h-1ZM80 404h1V408h-1ZM81 403h1V406h-1ZM82 402h1V404h-1ZM83 404h1V407h-1ZM84 403h1V406h-1ZM85 403h1V406h-1ZM86 402h1V406h-1ZM87 405h1V408h-1ZM88 403h1V408h-1ZM89 406h1V409h-1ZM90 401h1V405h-1ZM91 402h1V406h-1ZM92 400h1V408h-1ZM93 406h1V409h-1ZM94 404h1V407h-1ZM95 400h1V404h-1ZM96 402h1V405h-1ZM97 404h1V407h-1ZM98 401h1V404h-1ZM99 402h1V405h-1ZM100 407h1V410h-1ZM101 406h1V410h-1ZM102 405h1V409h-1ZM103 407h1V410h-1ZM104 406h1V410h-1ZM105 406h1V409h-1ZM106 407h1V410h-1ZM107 407h1V410h-1ZM108 406h1V409h-1ZM109 407h1V410h-1ZM110 407h1V410h-1ZM111 407h1V411h-1ZM112 407h1V410h-1ZM113 407h1V410h-1ZM114 406h1V409h-1ZM115 407h1V410h-1ZM116 406h1V409h-1ZM117 407h1V410h-1ZM118 406h1V410h-1ZM119 405h1V409h-1ZM120 402h1V410h-1ZM121 401h1V410h-1ZM122 406h1V410h-1ZM123 406h1V410h-1ZM124 406h1V409h-1ZM125 407h1V410h-1ZM126 405h1V409h-1ZM127 407h1V410h-1ZM128 407h1V411h-1ZM129 407h1V410h-1ZM130 407h1V410h-1ZM131 407h1V411h-1ZM132 407h1V410h-1ZM133 404h1V410h-1ZM134 405h1V409h-1ZM135 406h1V409h-1ZM136 406h1V409h-1ZM137 406h1V409h-1ZM138 406h1V409h-1ZM139 346h1V409h-1ZM140 345h1v9h-1ZM140 407h1V411h-1ZM141 345h1V410h-1ZM142 346h1v7h-1ZM142 406h1V409h-1ZM143 347h1V410h-1ZM144 345h1V410h-1ZM145 405h1V409h-1ZM146 406h1V410h-1ZM147 406h1V409h-1ZM148 407h1V410h-1ZM149 407h1V409h-1ZM150 406h1V409h-1ZM151 406h1V409h-1ZM152 349h1V409h-1ZM153 348h1v6h-1ZM153 402h1V410h-1ZM154 348h1v5h-1ZM154 406h1V410h-1ZM155 348h1V409h-1ZM156 406h1V409h-1ZM157 406h1V409h-1ZM158 405h1V409h-1ZM159 406h1V409h-1ZM160 406h1V409h-1ZM161 348h1V410h-1ZM162 348h1V410h-1ZM163 348h1V409h-1ZM164 346h1V410h-1ZM165 406h1V409h-1ZM166 407h1V410h-1ZM167 406h1V409h-1ZM168 407h1V410h-1ZM169 406h1V409h-1ZM170 407h1V410h-1ZM171 406h1V410h-1ZM172 407h1V411h-1ZM173 405h1V409h-1ZM174 408h1V411h-1ZM175 407h1V410h-1ZM176 406h1V409h-1ZM177 406h1V409h-1ZM178 406h1V410h-1ZM179 403h1V409h-1ZM180 405h1V409h-1ZM181 407h1V410h-1ZM182 403h1V410h-1ZM183 407h1V410h-1ZM184 406h1V409h-1ZM185 407h1V411h-1ZM186 407h1V411h-1ZM187 407h1V410h-1ZM188 407h1V409h-1ZM189 406h1V410h-1ZM190 406h1V409h-1ZM191 405h1V409h-1ZM192 407h1V411h-1ZM193 407h1V410h-1ZM194 405h1V409h-1ZM195 406h1V409h-1ZM196 407h1V410h-1ZM197 405h1V409h-1ZM198 406h1V409h-1ZM199 406h1V410h-1ZM200 406h1V410h-1ZM201 406h1V410h-1ZM202 406h1V410h-1ZM203 406h1V409h-1ZM204 406h1V409h-1ZM205 407h1V410h-1ZM206 406h1V410h-1ZM207 406h1V410h-1ZM208 407h1V411h-1ZM209 401h1V410h-1ZM210 401h1V409h-1ZM211 406h1V410h-1ZM212 406h1V410h-1ZM213 407h1V410h-1ZM214 406h1V409h-1ZM215 407h1V410h-1ZM216 406h1V410h-1ZM217 407h1V410h-1ZM218 405h1V409h-1ZM219 406h1V409h-1ZM220 407h1V410h-1ZM221 406h1V410h-1ZM222 406h1V409h-1ZM223 406h1V410h-1ZM224 406h1V409h-1ZM225 406h1V410h-1ZM226 406h1V409h-1ZM227 407h1V409h-1ZM228 406h1V409h-1ZM229 407h1V410h-1ZM230 405h1V410h-1ZM231 406h1V409h-1ZM232 406h1V410h-1ZM233 406h1V409h-1ZM234 407h1V411h-1ZM235 407h1V411h-1ZM236 407h1V411h-1ZM237 406h1V409h-1ZM238 406h1V409h-1ZM239 407h1V410h-1ZM240 407h1V410h-1ZM241 407h1V410h-1ZM242 407h1V410h-1ZM243 406h1V410h-1ZM244 407h1V410h-1ZM245 407h1V410h-1ZM246 406h1V409h-1ZM247 407h1V411h-1ZM248 406h1V409h-1ZM249 407h1V410h-1ZM250 406h1V410h-1ZM251 407h1V410h-1ZM252 406h1V409h-1ZM253 407h1V410h-1ZM254 407h1V411h-1ZM255 405h1V409h-1ZM256 407h1V410h-1ZM257 406h1V410h-1ZM258 406h1V410h-1ZM259 407h1V409h-1ZM260 405h1V409h-1ZM261 407h1V410h-1ZM262 407h1V410h-1ZM263 406h1V409h-1ZM264 406h1V409h-1ZM265 407h1V409h-1ZM266 376h1V409h-1ZM267 371h1V410h-1ZM268 407h1V410h-1ZM269 376h1V410h-1ZM270 406h1V409h-1ZM271 372h1v4h-1ZM271 407h1V409h-1ZM272 372h1V409h-1ZM273 373h1v5h-1ZM273 406h1V410h-1ZM274 406h1V410h-1ZM275 407h1V410h-1ZM276 376h1V409h-1ZM277 377h1v4h-1ZM277 406h1V410h-1ZM278 372h1V410h-1ZM279 373h1V409h-1ZM280 405h1V409h-1ZM281 407h1V410h-1ZM282 405h1V409h-1ZM283 406h1V410h-1ZM284 405h1V409h-1ZM285 405h1V409h-1ZM286 406h1V410h-1ZM287 406h1V410h-1ZM288 406h1V410h-1ZM289 407h1V409h-1ZM290 406h1V410h-1ZM291 407h1V410h-1ZM292 406h1V410h-1ZM293 406h1V409h-1ZM294 407h1V410h-1ZM295 406h1V410h-1ZM296 407h1V410h-1ZM297 407h1V410h-1ZM298 407h1V410h-1ZM299 406h1V410h-1ZM300 406h1V409h-1ZM301 406h1V409h-1ZM302 406h1V410h-1ZM303 406h1V410h-1ZM304 407h1V410h-1ZM305 394h1V410h-1ZM306 399h1V410h-1ZM307 406h1V409h-1ZM308 405h1V410h-1ZM309 407h1V410h-1ZM310 406h1V409h-1ZM311 406h1V410h-1ZM312 406h1V409h-1ZM313 407h1V410h-1ZM314 406h1V409h-1ZM315 405h1V409h-1ZM316 406h1V410h-1ZM317 405h1V409h-1ZM318 407h1V410h-1ZM319 407h1V410h-1ZM320 406h1V409h-1ZM321 403h1V409h-1ZM322 406h1V409h-1ZM323 407h1V411h-1ZM324 403h1V409h-1ZM325 407h1V410h-1ZM326 406h1V411h-1ZM327 406h1V410h-1ZM328 407h1V410h-1ZM329 406h1V410h-1ZM330 406h1V410h-1ZM331 407h1V410h-1ZM332 406h1V409h-1ZM333 405h1V409h-1ZM334 406h1V409h-1ZM335 406h1V409h-1ZM336 406h1V410h-1ZM337 406h1V410h-1ZM338 406h1V409h-1ZM339 390h1V410h-1ZM340 387h1V410h-1ZM341 386h1V410h-1ZM342 407h1V410h-1ZM343 401h1V410h-1ZM344 403h1V409h-1ZM345 405h1V409h-1ZM346 406h1V409h-1ZM347 406h1V409h-1ZM348 407h1V410h-1ZM349 407h1V410h-1ZM350 406h1V409h-1ZM351 406h1V410h-1ZM352 406h1V410h-1ZM353 399h1V405h-1ZM354 396h1V402h-1ZM355 397h1V402h-1ZM356 393h1V400h-1ZM357 394h1V400h-1ZM358 392h1V397h-1ZM359 393h1V400h-1ZM360 391h1V397h-1ZM361 392h1V398h-1ZM362 385h1V391h-1ZM363 393h1V399h-1ZM364 393h1V399h-1ZM365 392h1V398h-1ZM366 390h1V396h-1ZM367 393h1V400h-1ZM368 397h1V403h-1ZM369 396h1V402h-1ZM370 401h1V407h-1ZM371 400h1V405h-1ZM372 406h1V409h-1ZM373 407h1V410h-1ZM374 406h1V410h-1ZM375 407h1V410h-1ZM376 406h1V409h-1ZM377 407h1V410h-1ZM378 407h1V410h-1ZM379 407h1V410h-1ZM380 406h1V409h-1ZM381 407h1V409h-1ZM382 403h1V409h-1ZM383 406h1V410h-1ZM384 403h1V410h-1ZM385 406h1V409h-1ZM386 406h1V409h-1ZM387 407h1V410h-1ZM388 407h1V410h-1ZM389 407h1V410h-1ZM390 406h1V410h-1ZM391 406h1V410h-1ZM392 406h1V409h-1ZM393 406h1V409h-1ZM394 407h1V411h-1ZM395 406h1V410h-1ZM396 407h1V411h-1ZM397 406h1V410h-1ZM398 406h1V410h-1ZM399 406h1V410h-1ZM400 407h1V411h-1ZM401 407h1V410h-1ZM402 407h1V411h-1ZM403 406h1V410h-1ZM404 407h1V410h-1ZM405 405h1V409h-1ZM406 407h1V410h-1ZM407 407h1V410h-1ZM408 407h1V409h-1ZM409 406h1V410h-1ZM410 406h1V409h-1ZM411 406h1V409h-1ZM412 407h1V410h-1ZM413 406h1V410h-1ZM414 402h1V409h-1ZM415 407h1V411h-1ZM416 406h1V409h-1ZM417 407h1V411h-1ZM418 406h1V409h-1ZM419 406h1V410h-1ZM420 406h1V409h-1ZM421 406h1V410h-1ZM422 406h1V410h-1ZM423 406h1V409h-1ZM424 407h1V410h-1ZM425 406h1V409h-1ZM426 407h1V410h-1ZM427 407h1V410h-1ZM428 405h1V409h-1ZM429 406h1V409h-1ZM430 406h1V409h-1ZM431 406h1V410h-1ZM432 406h1V409h-1ZM433 407h1V411h-1ZM434 407h1V411h-1ZM435 407h1V410h-1ZM436 403h1V410h-1ZM437 406h1V409h-1ZM438 406h1V409h-1ZM439 402h1V410h-1ZM440 406h1V409h-1ZM441 407h1V410h-1ZM442 401h1V409h-1ZM443 407h1V410h-1ZM444 407h1V410h-1ZM445 407h1V410h-1ZM446 407h1V410h-1ZM447 406h1V410h-1ZM448 406h1V410h-1ZM449 407h1V410h-1ZM450 407h1V410h-1ZM451 405h1V409h-1ZM452 406h1V409h-1ZM453 406h1V410h-1ZM454 405h1V409h-1ZM455 407h1V410h-1ZM456 407h1V410h-1ZM457 406h1V410h-1ZM458 400h1V406h-1ZM459 402h1V408h-1ZM460 399h1V406h-1ZM461 401h1V407h-1ZM462 395h1V400h-1ZM463 398h1V405h-1ZM464 399h1V405h-1ZM465 398h1V404h-1ZM466 398h1V405h-1ZM467 397h1V403h-1ZM468 391h1V397h-1ZM469 396h1V402h-1ZM470 393h1V399h-1ZM471 390h1V397h-1ZM472 397h1V403h-1ZM473 395h1V401h-1ZM474 397h1V403h-1ZM475 398h1V403h-1ZM476 398h1V404h-1ZM477 399h1V404h-1ZM478 395h1V401h-1ZM479 399h1V405h-1ZM480 399h1V405h-1ZM481 400h1V406h-1ZM482 397h1V403h-1ZM483 399h1V404h-1ZM484 406h1V410h-1ZM485 406h1V410h-1ZM486 406h1V409h-1ZM487 407h1V410h-1ZM488 403h1V410h-1ZM489 406h1V411h-1ZM490 406h1V410h-1ZM491 406h1V410h-1ZM492 406h1V409h-1ZM493 407h1V411h-1ZM494 406h1V409h-1ZM495 406h1V409h-1ZM496 405h1V409h-1ZM497 407h1V410h-1ZM498 407h1V411h-1ZM499 406h1V409h-1ZM500 406h1V410h-1ZM501 406h1V410h-1ZM502 406h1V409h-1ZM503 407h1V410h-1ZM504 407h1V410h-1ZM505 406h1V410h-1ZM506 406h1V410h-1ZM507 406h1V409h-1ZM508 407h1V410h-1ZM509 406h1V410h-1ZM510 406h1V410h-1ZM511 406h1V410h-1ZM512 405h1V409h-1ZM513 406h1V409h-1ZM514 405h1V409h-1ZM515 407h1V410h-1ZM516 407h1V411h-1ZM517 407h1V411h-1ZM518 406h1V409h-1ZM519 405h1V409h-1ZM520 405h1V409h-1ZM521 407h1V410h-1ZM522 407h1V409h-1ZM523 406h1V410h-1ZM524 407h1V410h-1ZM525 406h1V410h-1ZM526 406h1V410h-1ZM527 406h1V410h-1ZM528 406h1V410h-1ZM529 407h1V411h-1ZM530 406h1V410h-1ZM531 407h1V411h-1ZM532 405h1V409h-1ZM533 407h1V411h-1ZM534 406h1V409h-1ZM535 406h1V410h-1ZM536 406h1V410h-1ZM537 406h1V409h-1ZM538 406h1V409h-1ZM539 406h1V410h-1ZM540 407h1V410h-1ZM541 407h1V409h-1ZM542 406h1V409h-1ZM543 407h1V411h-1ZM544 407h1V410h-1ZM545 406h1V410h-1ZM546 406h1V409h-1ZM547 406h1V409h-1ZM548 404h1V410h-1ZM549 407h1V410h-1ZM550 406h1V409h-1ZM551 407h1V410h-1ZM552 406h1V410h-1ZM553 407h1V410h-1ZM554 407h1V410h-1ZM555 406h1V410h-1ZM556 407h1V411h-1ZM557 406h1V409h-1ZM558 406h1V410h-1ZM559 407h1V410h-1ZM560 406h1V410h-1ZM561 406h1V410h-1ZM562 402h1V409h-1ZM563 407h1V410h-1ZM564 406h1V410h-1ZM565 407h1V411h-1ZM566 406h1V409h-1ZM567 407h1V411h-1ZM568 407h1V409h-1ZM569 407h1V410h-1ZM570 406h1V410h-1ZM571 407h1V410h-1ZM572 406h1V409h-1ZM573 406h1V410h-1ZM574 406h1V410h-1ZM575 405h1V409h-1ZM576 407h1V410h-1ZM577 407h1V410h-1ZM578 407h1V410h-1ZM579 407h1V410h-1ZM580 406h1V409h-1ZM581 406h1V409h-1ZM582 405h1V409h-1ZM583 406h1V409h-1ZM584 406h1V409h-1ZM585 406h1V410h-1ZM586 406h1V409h-1ZM587 406h1V410h-1ZM588 406h1V410h-1ZM589 407h1V410h-1ZM590 407h1V410h-1ZM591 403h1V409h-1ZM592 407h1V410h-1ZM593 407h1V410h-1ZM594 406h1V409h-1ZM595 406h1V409h-1ZM596 407h1V409h-1ZM597 406h1V410h-1ZM598 407h1V410h-1ZM599 407h1V410h-1ZM600 407h1V410h-1ZM601 407h1V410h-1ZM602 406h1V410h-1ZM603 407h1V410h-1ZM604 405h1V409h-1ZM605 407h1V410h-1ZM606 407h1V410h-1ZM607 406h1V409h-1ZM608 406h1V410h-1ZM609 406h1V410h-1ZM610 407h1V410h-1ZM611 406h1V409h-1ZM612 407h1V411h-1ZM613 406h1V410h-1ZM614 406h1V409h-1ZM615 406h1V410h-1ZM616 406h1V410h-1ZM617 406h1V409h-1ZM618 406h1V409h-1ZM619 406h1V410h-1ZM620 406h1V410h-1ZM621 406h1V409h-1ZM622 406h1V410h-1ZM623 406h1V409h-1ZM624 406h1V409h-1ZM625 406h1V409h-1ZM626 407h1V410h-1ZM627 407h1V410h-1ZM628 407h1V410h-1ZM629 406h1V409h-1ZM630 406h1V409h-1ZM631 407h1V410h-1ZM632 407h1V410h-1ZM633 406h1V409h-1ZM634 406h1V410h-1ZM635 407h1V409h-1ZM636 406h1V409h-1ZM637 406h1V410h-1ZM638 403h1V409h-1ZM639 407h1V410h-1ZM640 406h1V411h-1ZM641 406h1V409h-1ZM642 406h1V409h-1ZM643 407h1V410h-1ZM644 406h1V409h-1ZM645 406h1V409h-1ZM646 406h1V409h-1ZM647 406h1V409h-1ZM648 405h1V409h-1ZM649 406h1V410h-1ZM650 407h1V410h-1ZM651 406h1V410h-1ZM652 406h1V410h-1ZM653 405h1V409h-1ZM654 407h1V410h-1ZM655 406h1V410h-1ZM656 406h1V409h-1ZM657 407h1V409h-1ZM658 406h1V410h-1ZM659 406h1V410h-1ZM660 407h1V410h-1ZM661 406h1V409h-1ZM662 406h1V409h-1ZM663 406h1V410h-1ZM664 407h1V410h-1ZM665 407h1V410h-1ZM666 406h1V409h-1ZM667 407h1V410h-1ZM668 404h1V409h-1ZM669 407h1V411h-1ZM670 406h1V409h-1ZM671 406h1V409h-1ZM672 406h1V409h-1ZM673 406h1V409h-1ZM674 405h1V409h-1ZM675 406h1V410h-1ZM676 407h1V410h-1ZM677 406h1V409h-1ZM678 407h1V411h-1ZM679 407h1V411h-1ZM680 406h1V410h-1ZM681 406h1V410h-1ZM682 406h1V409h-1ZM683 407h1V410h-1ZM684 406h1V410h-1ZM685 407h1V410h-1ZM686 407h1V411h-1ZM687 407h1V410h-1ZM688 407h1V410h-1ZM689 406h1V410h-1ZM690 406h1V409h-1ZM691 406h1V410h-1ZM692 407h1V410h-1ZM693 406h1V409h-1ZM694 406h1V410h-1ZM695 406h1V410h-1ZM696 405h1V408h-1ZM697 406h1V410h-1ZM698 407h1V410h-1ZM699 406h1V410h-1ZM700 406h1V409h-1ZM701 407h1V410h-1ZM702 406h1V409h-1ZM703 407h1V410h-1ZM704 406h1V410h-1ZM705 405h1V409h-1ZM706 407h1V410h-1ZM707 407h1V410h-1ZM708 402h1V410h-1ZM709 407h1V411h-1ZM710 407h1V410h-1ZM711 406h1V409h-1ZM712 402h1V410h-1ZM713 403h1V410h-1ZM714 407h1V411h-1ZM715 407h1V411h-1ZM716 407h1V410h-1ZM717 406h1V410h-1ZM718 406h1V409h-1ZM719 406h1V410h-1ZM720 406h1V410h-1ZM721 406h1V409h-1ZM722 407h1V411h-1ZM723 406h1V411h-1ZM724 406h1V410h-1ZM725 406h1V409h-1ZM726 407h1V410h-1ZM727 407h1V410h-1ZM728 406h1V409h-1ZM729 407h1V410h-1ZM730 405h1V409h-1ZM731 406h1V410h-1ZM732 407h1V410h-1ZM733 406h1V409h-1ZM734 406h1V410h-1ZM735 406h1V410h-1ZM736 406h1V409h-1ZM737 406h1V410h-1ZM738 407h1V410h-1ZM739 406h1V410h-1ZM740 405h1V409h-1ZM741 406h1V410h-1ZM742 407h1V410h-1ZM743 406h1V410h-1ZM744 406h1V409h-1ZM745 407h1V410h-1ZM746 403h1V410h-1ZM747 407h1V409h-1ZM748 406h1V410h-1ZM749 407h1V409h-1ZM750 406h1V409h-1ZM751 406h1V409h-1ZM752 405h1V409h-1ZM753 406h1V410h-1ZM754 406h1V410h-1ZM755 407h1V411h-1ZM756 406h1V409h-1ZM757 407h1V410h-1ZM758 406h1V410h-1ZM759 407h1V410h-1ZM760 406h1V409h-1ZM761 406h1V409h-1ZM762 407h1V411h-1ZM763 407h1V411h-1ZM764 406h1V410h-1ZM765 406h1V409h-1ZM766 406h1V410h-1ZM767 406h1V410h-1ZM768 406h1V410h-1ZM769 405h1V409h-1ZM770 406h1V409h-1ZM771 406h1V410h-1ZM772 406h1V410h-1ZM773 406h1V410h-1Z" fill="#ffff00" shape-rendering="crispEdges"/>
<rect x="49" y="283.1" width="2" height="144" fill="#8c8c8c" />
<rect x="49" y="425" width="725" height="2" fill="#8c8c8c" />
<text x="49.8" y="447" font-family="Liberation Sans" font-size="18" fill="#ffffff" text-anchor="middle" >20MHz</text>
<text x="130.2" y="447" font-family="Liberation Sans" font-size="18" fill="#ffffff" text-anchor="middle" >684MHz</text>
<text x="210.6" y="447" font-family="Liberation Sans" font-size="18" fill="#ffffff" text-anchor="middle" >1349M...</text>
<text x="290.9" y="447" font-family="Liberation Sans" font-size="18" fill="#ffffff" text-anchor="middle" >2013M...</text>
<text x="371.3" y="447" font-family="Liberation Sans" font-size="18" fill="#ffffff" text-anchor="middle" >2678M...</text>
<text x="451.7" y="447" font-family="Liberation Sans" font-size="18" fill="#ffffff" text-anchor="middle" >3342M...</text>
<text x="532.1" y="447" font-family="Liberation Sans" font-size="18" fill="#ffffff" text-anchor="middle" >4007M...</text>
<text x="612.4" y="447" font-family="Liberation Sans" font-size="18" fill="#ffffff" text-anchor="middle" >4671M...</text>
<text x="692.8" y="447" font-family="Liberation Sans" font-size="18" fill="#ffffff" text-anchor="middle" >5336M...</text>
<text x="773.2" y="447" font-family="Liberation Sans" font-size="18" fill="#ffffff" text-anchor="middle" >6000M...</text>
<rect x="11" y="469" width="7.5" height="1" fill="#dcdcdc" />
<rect x="154.5" y="469" width="657.5" height="1" fill="#dcdcdc" />
<rect x="11" y="469" width="1" height="253" fill="#dcdcdc" />
<rect x="811" y="469" width="1" height="253" fill="#dcdcdc" />
<rect x="11" y="721" width="801" height="1" fill="#dcdcdc" />
<text x="21.5" y="476" font-family="Liberation Sans" font-size="17.9" fill="#000" text-anchor="start" >Signal Spectrum</text>
<rect x="12" y="481" width="799" height="241" fill="#f0f0f0" />
<rect x="12" y="481" width="799" height="1" fill="#828790" />
<rect x="12" y="721" width="799" height="1" fill="#828790" />
<rect x="12" y="481" width="1" height="241" fill="#828790" />
<rect x="810" y="481" width="1" height="241" fill="#828790" />
<rect x="809" y="482" width="1" height="239" fill="#ffffff" />
<rect x="13" y="720" width="797" height="1" fill="#ffffff" />
<clipPath id="sp1"><rect x="23" y="492" width="434" height="198"/></clipPath>
<g clip-path="url(#sp1)">
<rect x="23" y="492" width="434" height="198" fill="#ffffff" />
<rect x="24" y="493" width="432" height="196" fill="#000000" />
<line x1="72" y1="523.5" x2="440.5" y2="523.5" stroke="#ffa500" stroke-width="1" stroke-dasharray="1.5 3" />
<rect x="71" y="523" width="7" height="1" fill="#ffa500" />
<text x="65" y="528.5" font-family="Liberation Mono" font-size="14" fill="#00ff00" text-anchor="end" stroke="#000" stroke-width="0.2">−80</text>
<line x1="72" y1="547.5" x2="440.5" y2="547.5" stroke="#ffa500" stroke-width="1" stroke-dasharray="1.5 3" />
<rect x="71" y="547" width="7" height="1" fill="#ffa500" />
<text x="65" y="552.5" font-family="Liberation Mono" font-size="14" fill="#00ff00" text-anchor="end" stroke="#000" stroke-width="0.2">−90</text>
<line x1="72" y1="571.5" x2="440.5" y2="571.5" stroke="#ffa500" stroke-width="1" stroke-dasharray="1.5 3" />
<rect x="71" y="571" width="7" height="1" fill="#ffa500" />
<text x="65" y="576.5" font-family="Liberation Mono" font-size="14" fill="#00ff00" text-anchor="end" stroke="#000" stroke-width="0.2">−100</text>
<line x1="72" y1="595.5" x2="440.5" y2="595.5" stroke="#ffa500" stroke-width="1" stroke-dasharray="1.5 3" />
<rect x="71" y="595" width="7" height="1" fill="#ffa500" />
<text x="65" y="600.5" font-family="Liberation Mono" font-size="14" fill="#00ff00" text-anchor="end" stroke="#000" stroke-width="0.2">−110</text>
<line x1="72" y1="619.5" x2="440.5" y2="619.5" stroke="#ffa500" stroke-width="1" stroke-dasharray="1.5 3" />
<rect x="71" y="619" width="7" height="1" fill="#ffa500" />
<text x="65" y="624.5" font-family="Liberation Mono" font-size="14" fill="#00ff00" text-anchor="end" stroke="#000" stroke-width="0.2">−120</text>
<line x1="72" y1="643.5" x2="440.5" y2="643.5" stroke="#ffa500" stroke-width="1" stroke-dasharray="1.5 3" />
<rect x="71" y="643" width="7" height="1" fill="#ffa500" />
<text x="65" y="648.5" font-family="Liberation Mono" font-size="14" fill="#00ff00" text-anchor="end" stroke="#000" stroke-width="0.2">−130</text>
<rect x="71" y="513" width="4" height="1" fill="#ffa500" />
<rect x="71" y="518" width="4" height="1" fill="#ffa500" />
<rect x="71" y="523" width="4" height="1" fill="#ffa500" />
<rect x="71" y="528" width="4" height="1" fill="#ffa500" />
<rect x="71" y="533" width="4" height="1" fill="#ffa500" />
<rect x="71" y="537" width="4" height="1" fill="#ffa500" />
<rect x="71" y="542" width="4" height="1" fill="#ffa500" />
<rect x="71" y="547" width="4" height="1" fill="#ffa500" />
<rect x="71" y="552" width="4" height="1" fill="#ffa500" />
<rect x="71" y="557" width="4" height="1" fill="#ffa500" />
<rect x="71" y="561" width="4" height="1" fill="#ffa500" />
<rect x="71" y="566" width="4" height="1" fill="#ffa500" />
<rect x="71" y="571" width="4" height="1" fill="#ffa500" />
<rect x="71" y="576" width="4" height="1" fill="#ffa500" />
<rect x="71" y="581" width="4" height="1" fill="#ffa500" />
<rect x="71" y="585" width="4" height="1" fill="#ffa500" />
<rect x="71" y="590" width="4" height="1" fill="#ffa500" />
<rect x="71" y="595" width="4" height="1" fill="#ffa500" />
<rect x="71" y="600" width="4" height="1" fill="#ffa500" />
<rect x="71" y="605" width="4" height="1" fill="#ffa500" />
<rect x="71" y="609" width="4" height="1" fill="#ffa500" />
<rect x="71" y="614" width="4" height="1" fill="#ffa500" />
<rect x="71" y="619" width="4" height="1" fill="#ffa500" />
<rect x="71" y="624" width="4" height="1" fill="#ffa500" />
<rect x="71" y="629" width="4" height="1" fill="#ffa500" />
<rect x="71" y="633" width="4" height="1" fill="#ffa500" />
<rect x="71" y="638" width="4" height="1" fill="#ffa500" />
<rect x="71" y="643" width="4" height="1" fill="#ffa500" />
<rect x="71" y="648" width="4" height="1" fill="#ffa500" />
<rect x="71" y="653" width="4" height="1" fill="#ffa500" />
<rect x="71" y="657" width="4" height="1" fill="#ffa500" />
<rect x="71" y="662" width="4" height="1" fill="#ffa500" />
<line x1="126.5" y1="507" x2="126.5" y2="664" stroke="#ffa500" stroke-width="1" stroke-dasharray="1.5 3"/>
<line x1="196.5" y1="507" x2="196.5" y2="664" stroke="#ffa500" stroke-width="1" stroke-dasharray="1.5 3"/>
<line x1="266.5" y1="507" x2="266.5" y2="664" stroke="#ffa500" stroke-width="1" stroke-dasharray="1.5 3"/>
<line x1="336.5" y1="507" x2="336.5" y2="664" stroke="#ffa500" stroke-width="1" stroke-dasharray="1.5 3"/>
<line x1="406.5" y1="507" x2="406.5" y2="664" stroke="#ffa500" stroke-width="1" stroke-dasharray="1.5 3"/>
<rect x="74" y="660" width="1" height="4" fill="#ffa500" />
<rect x="92" y="660" width="1" height="4" fill="#ffa500" />
<rect x="109" y="660" width="1" height="4" fill="#ffa500" />
<rect x="126" y="660" width="1" height="4" fill="#ffa500" />
<rect x="144" y="660" width="1" height="4" fill="#ffa500" />
<rect x="162" y="660" width="1" height="4" fill="#ffa500" />
<rect x="179" y="660" width="1" height="4" fill="#ffa500" />
<rect x="196" y="660" width="1" height="4" fill="#ffa500" />
<rect x="214" y="660" width="1" height="4" fill="#ffa500" />
<rect x="232" y="660" width="1" height="4" fill="#ffa500" />
<rect x="249" y="660" width="1" height="4" fill="#ffa500" />
<rect x="266" y="660" width="1" height="4" fill="#ffa500" />
<rect x="284" y="660" width="1" height="4" fill="#ffa500" />
<rect x="302" y="660" width="1" height="4" fill="#ffa500" />
<rect x="319" y="660" width="1" height="4" fill="#ffa500" />
<rect x="336" y="660" width="1" height="4" fill="#ffa500" />
<rect x="354" y="660" width="1" height="4" fill="#ffa500" />
<rect x="372" y="660" width="1" height="4" fill="#ffa500" />
<rect x="389" y="660" width="1" height="4" fill="#ffa500" />
<rect x="406" y="660" width="1" height="4" fill="#ffa500" />
<rect x="424" y="660" width="1" height="4" fill="#ffa500" />
<rect x="71" y="513" width="1" height="153" fill="#ffa500" />
<rect x="70" y="664" width="366" height="2" fill="#ffa500" />
<rect x="71" y="509" width="3" height="1" fill="#ffa500" />
<polyline points="71.0,559.8 71.8,575.8 72.5,558.7 73.3,571.3 74.1,559.8 74.8,559.1 75.6,587.3 76.4,626.3 77.2,586.2 77.9,568.8 78.7,604.9 79.5,573.2 80.2,583.0 81.0,574.1 81.8,557.8 82.5,570.3 83.3,564.2 84.1,574.1 84.8,580.4 85.6,558.8 86.4,571.1 87.1,575.7 87.9,577.6 88.7,563.9 89.5,578.9 90.2,572.0 91.0,615.9 91.8,570.8 92.5,571.5 93.3,576.2 94.1,572.3 94.8,567.0 95.6,588.6 96.4,578.6 97.1,565.8 97.9,574.1 98.7,568.9 99.4,568.1 100.2,568.7 101.0,598.4 101.8,577.2 102.5,567.4 103.3,569.1 104.1,568.4 104.8,571.1 105.6,589.2 106.4,575.9 107.1,573.9 107.9,564.2 108.7,566.3 109.4,559.0 110.2,573.3 111.0,584.4 111.7,590.0 112.5,578.1 113.3,587.2 114.0,591.7 114.8,565.6 115.6,574.2 116.4,573.7 117.1,569.8 117.9,564.6 118.7,570.3 119.4,599.8 120.2,553.8 121.0,564.9 121.7,600.9 122.5,568.6 123.3,577.8 124.0,574.3 124.8,578.4 125.6,579.0 126.3,563.5 127.1,559.2 127.9,573.9 128.7,572.4 129.4,574.0 130.2,562.5 131.0,561.9 131.7,585.7 132.5,561.2 133.3,541.6 134.0,569.0 134.8,541.6 135.6,579.4 136.3,551.2 137.1,571.5 137.9,553.1 138.7,551.1 139.4,556.2 140.2,583.6 141.0,562.1 141.7,561.8 142.5,549.9 143.3,610.4 144.0,571.4 144.8,564.9 145.6,578.4 146.3,593.8 147.1,559.3 147.9,564.8 148.6,568.8 149.4,543.3 150.2,570.5 150.9,566.4 151.7,573.1 152.5,570.2 153.3,556.3 154.0,570.7 154.8,571.8 155.6,557.1 156.3,539.2 157.1,555.4 157.9,565.4 158.6,554.8 159.4,554.7 160.2,589.9 160.9,561.8 161.7,578.2 162.5,567.0 163.2,563.5 164.0,561.1 164.8,581.6 165.6,565.9 166.3,576.5 167.1,567.1 167.9,552.8 168.6,548.0 169.4,566.6 170.2,603.0 170.9,561.6 171.7,556.9 172.5,559.1 173.2,551.5 174.0,549.1 174.8,574.0 175.6,577.6 176.3,556.4 177.1,547.5 177.9,547.4 178.6,576.0 179.4,550.7 180.2,559.1 180.9,557.5 181.7,553.0 182.5,550.6 183.2,590.3 184.0,559.6 184.8,553.6 185.5,582.8 186.3,572.4 187.1,568.4 187.8,560.6 188.6,602.2 189.4,567.2 190.2,571.0 190.9,570.2 191.7,572.7 192.5,554.0 193.2,540.6 194.0,569.1 194.8,566.6 195.5,561.1 196.3,548.9 197.1,555.0 197.8,559.8 198.6,568.5 199.4,559.0 200.2,550.1 200.9,561.0 201.7,593.5 202.5,562.7 203.2,548.4 204.0,573.5 204.8,561.7 205.5,559.6 206.3,584.8 207.1,556.9 207.8,570.4 208.6,570.6 209.4,554.4 210.1,564.3 210.9,567.7 211.7,581.4 212.4,565.2 213.2,578.1 214.0,559.6 214.8,559.8 215.5,555.4 216.3,562.5 217.1,554.0 217.8,566.8 218.6,566.6 219.4,568.7 220.1,543.8 220.9,559.4 221.7,564.8 222.4,579.3 223.2,559.5 224.0,571.0 224.8,583.9 225.5,562.8 226.3,561.9 227.1,555.3 227.8,547.4 228.6,571.4 229.4,562.3 230.1,561.3 230.9,585.3 231.7,549.1 232.4,563.6 233.2,551.2 234.0,598.8 234.7,565.0 235.5,557.9 236.3,560.6 237.1,579.4 237.8,537.3 238.6,585.8 239.4,572.3 240.1,557.8 240.9,572.9 241.7,561.7 242.4,562.0 243.2,567.6 244.0,573.0 244.7,565.0 245.5,610.4 246.3,568.0 247.0,548.2 247.8,551.8 248.6,570.6 249.3,565.6 250.1,555.7 250.9,566.2 251.7,544.9 252.4,574.2 253.2,552.4 254.0,575.0 254.7,571.9 255.5,572.4 256.3,563.6 257.0,565.7 257.8,586.9 258.6,556.0 259.3,552.0 260.1,577.3 260.9,563.0 261.6,565.1 262.4,562.7 263.2,583.4 264.0,573.1 264.7,569.2 265.5,567.4 266.3,536.9 267.0,561.7 267.8,584.1 268.6,549.1 269.3,585.2 270.1,569.5 270.9,568.7 271.6,616.6 272.4,552.3 273.2,568.8 273.9,559.7 274.7,577.2 275.5,583.6 276.3,574.5 277.0,563.3 277.8,553.1 278.6,591.5 279.3,614.5 280.1,552.7 280.9,567.9 281.6,539.7 282.4,559.6 283.2,581.3 283.9,560.6 284.7,555.2 285.5,586.1 286.2,570.7 287.0,570.6 287.8,562.0 288.6,576.2 289.3,530.0 290.1,556.3 290.9,563.4 291.6,567.9 292.4,556.3 293.2,556.3 293.9,550.7 294.7,557.7 295.5,565.8 296.2,570.0 297.0,588.2 297.8,561.0 298.6,559.7 299.3,577.3 300.1,557.3 300.9,551.7 301.6,556.2 302.4,563.9 303.2,565.1 303.9,559.7 304.7,550.8 305.5,551.0 306.2,562.1 307.0,581.2 307.8,571.9 308.5,562.4 309.3,572.3 310.1,558.0 310.9,565.9 311.6,560.1 312.4,547.9 313.2,564.4 313.9,569.1 314.7,566.2 315.5,557.7 316.2,578.2 317.0,568.9 317.8,570.4 318.5,574.6 319.3,573.6 320.1,583.6 320.8,554.8 321.6,560.1 322.4,571.2 323.1,569.0 323.9,558.4 324.7,556.4 325.5,570.6 326.2,546.6 327.0,556.0 327.8,557.2 328.5,560.6 329.3,562.6 330.1,565.1 330.8,539.3 331.6,552.3 332.4,574.6 333.1,567.9 333.9,577.2 334.7,571.0 335.4,559.3 336.2,558.8 337.0,563.2 337.8,570.1 338.5,563.9 339.3,553.0 340.1,557.5 340.8,552.7 341.6,557.2 342.4,541.6 343.1,553.2 343.9,546.0 344.7,582.2 345.4,546.8 346.2,558.5 347.0,545.6 347.8,573.0 348.5,576.1 349.3,566.3 350.1,568.9 350.8,566.4 351.6,562.3 352.4,552.7 353.1,577.9 353.9,562.3 354.7,552.0 355.4,564.5 356.2,570.2 357.0,564.0 357.7,569.3 358.5,563.4 359.3,554.4 360.1,555.3 360.8,564.0 361.6,556.1 362.4,573.5 363.1,563.6 363.9,566.1 364.7,553.8 365.4,571.1 366.2,577.6 367.0,591.3 367.7,550.7 368.5,575.9 369.3,566.2 370.0,567.9 370.8,571.2 371.6,554.2 372.4,561.7 373.1,575.3 373.9,581.6 374.7,563.2 375.4,569.9 376.2,566.9 377.0,551.8 377.7,564.4 378.5,568.3 379.3,556.4 380.0,566.8 380.8,560.8 381.6,551.2 382.3,559.7 383.1,583.9 383.9,571.0 384.6,560.9 385.4,553.8 386.2,554.2 387.0,569.9 387.7,562.1 388.5,561.7 389.3,564.0 390.0,627.6 390.8,572.1 391.6,563.5 392.3,561.1 393.1,578.8 393.9,558.4 394.6,579.3 395.4,569.0 396.2,561.1 396.9,568.5 397.7,561.1 398.5,572.8 399.3,573.4 400.0,574.3 400.8,579.2 401.6,576.1 402.3,573.8 403.1,566.8 403.9,572.1 404.6,555.6 405.4,569.0 406.2,563.2 406.9,602.9 407.7,561.2 408.5,543.1 409.2,568.5 410.0,568.8 410.8,567.2 411.6,566.2 412.3,574.5 413.1,551.9 413.9,572.2 414.6,548.5 415.4,564.5 416.2,570.0 416.9,554.2 417.7,568.4 418.5,583.2 419.2,565.2 420.0,570.4 420.8,583.1 421.6,578.5 422.3,565.9 423.1,575.3 423.9,569.1 424.6,558.1 425.4,565.2 426.2,588.4 426.9,569.1 427.7,573.7 428.5,562.6 429.2,553.1 430.0,561.6 430.8,572.3 431.5,571.2 432.3,583.6 433.1,564.6 433.9,569.2 434.6,560.2 435.4,576.6 436.2,570.7 436.9,560.2 437.7,578.5 438.5,568.9 439.2,582.9 440.0,584.5" fill="none" stroke="#f0e800" stroke-width="1.15"/>
<text x="118" y="680" font-family="Liberation Mono" font-size="13.33" fill="#00ff00" text-anchor="start" stroke="#000" stroke-width="0.25">Center(MHz):61.7036,Bw(MHz):8.8196</text>
</g>
<clipPath id="sp2"><rect x="462" y="492" width="327" height="198"/></clipPath>
<g clip-path="url(#sp2)">
<rect x="462" y="492" width="342" height="198" fill="#ffffff" />
<rect x="463" y="493" width="340" height="196" fill="#000000" />
<line x1="511" y1="534.2" x2="813.5" y2="534.2" stroke="#ffa500" stroke-width="1" stroke-dasharray="1.5 3" />
<rect x="510" y="534" width="7" height="1" fill="#ffa500" />
<text x="504" y="539.2" font-family="Liberation Mono" font-size="14" fill="#00ff00" text-anchor="end" stroke="#000" stroke-width="0.2">−60</text>
<line x1="511" y1="567.4000000000001" x2="813.5" y2="567.4000000000001" stroke="#ffa500" stroke-width="1" stroke-dasharray="1.5 3" />
<rect x="510" y="567" width="7" height="1" fill="#ffa500" />
<text x="504" y="572.4000000000001" font-family="Liberation Mono" font-size="14" fill="#00ff00" text-anchor="end" stroke="#000" stroke-width="0.2">−80</text>
<line x1="511" y1="600.6" x2="813.5" y2="600.6" stroke="#ffa500" stroke-width="1" stroke-dasharray="1.5 3" />
<rect x="510" y="600" width="7" height="1" fill="#ffa500" />
<text x="504" y="605.6" font-family="Liberation Mono" font-size="14" fill="#00ff00" text-anchor="end" stroke="#000" stroke-width="0.2">−100</text>
<line x1="511" y1="633.8000000000001" x2="813.5" y2="633.8000000000001" stroke="#ffa500" stroke-width="1" stroke-dasharray="1.5 3" />
<rect x="510" y="633" width="7" height="1" fill="#ffa500" />
<text x="504" y="638.8000000000001" font-family="Liberation Mono" font-size="14" fill="#00ff00" text-anchor="end" stroke="#000" stroke-width="0.2">−120</text>
<rect x="510" y="514" width="4" height="1" fill="#ffa500" />
<rect x="510" y="520" width="4" height="1" fill="#ffa500" />
<rect x="510" y="527" width="4" height="1" fill="#ffa500" />
<rect x="510" y="534" width="4" height="1" fill="#ffa500" />
<rect x="510" y="540" width="4" height="1" fill="#ffa500" />
<rect x="510" y="547" width="4" height="1" fill="#ffa500" />
<rect x="510" y="554" width="4" height="1" fill="#ffa500" />
<rect x="510" y="560" width="4" height="1" fill="#ffa500" />
<rect x="510" y="567" width="4" height="1" fill="#ffa500" />
<rect x="510" y="574" width="4" height="1" fill="#ffa500" />
<rect x="510" y="580" width="4" height="1" fill="#ffa500" />
<rect x="510" y="587" width="4" height="1" fill="#ffa500" />
<rect x="510" y="593" width="4" height="1" fill="#ffa500" />
<rect x="510" y="600" width="4" height="1" fill="#ffa500" />
<rect x="510" y="607" width="4" height="1" fill="#ffa500" />
<rect x="510" y="613" width="4" height="1" fill="#ffa500" />
<rect x="510" y="620" width="4" height="1" fill="#ffa500" />
<rect x="510" y="627" width="4" height="1" fill="#ffa500" />
<rect x="510" y="633" width="4" height="1" fill="#ffa500" />
<rect x="510" y="640" width="4" height="1" fill="#ffa500" />
<rect x="510" y="647" width="4" height="1" fill="#ffa500" />
<rect x="510" y="653" width="4" height="1" fill="#ffa500" />
<rect x="510" y="660" width="4" height="1" fill="#ffa500" />
<line x1="575.5" y1="507" x2="575.5" y2="664" stroke="#ffa500" stroke-width="1" stroke-dasharray="1.5 3"/>
<line x1="643.5" y1="507" x2="643.5" y2="664" stroke="#ffa500" stroke-width="1" stroke-dasharray="1.5 3"/>
<line x1="711.5" y1="507" x2="711.5" y2="664" stroke="#ffa500" stroke-width="1" stroke-dasharray="1.5 3"/>
<line x1="779.5" y1="507" x2="779.5" y2="664" stroke="#ffa500" stroke-width="1" stroke-dasharray="1.5 3"/>
<rect x="524" y="660" width="1" height="4" fill="#ffa500" />
<rect x="542" y="660" width="1" height="4" fill="#ffa500" />
<rect x="558" y="660" width="1" height="4" fill="#ffa500" />
<rect x="576" y="660" width="1" height="4" fill="#ffa500" />
<rect x="592" y="660" width="1" height="4" fill="#ffa500" />
<rect x="610" y="660" width="1" height="4" fill="#ffa500" />
<rect x="626" y="660" width="1" height="4" fill="#ffa500" />
<rect x="644" y="660" width="1" height="4" fill="#ffa500" />
<rect x="660" y="660" width="1" height="4" fill="#ffa500" />
<rect x="678" y="660" width="1" height="4" fill="#ffa500" />
<rect x="694" y="660" width="1" height="4" fill="#ffa500" />
<rect x="712" y="660" width="1" height="4" fill="#ffa500" />
<rect x="728" y="660" width="1" height="4" fill="#ffa500" />
<rect x="746" y="660" width="1" height="4" fill="#ffa500" />
<rect x="762" y="660" width="1" height="4" fill="#ffa500" />
<rect x="780" y="660" width="1" height="4" fill="#ffa500" />
<rect x="796" y="660" width="1" height="4" fill="#ffa500" />
<rect x="510" y="513" width="1" height="153" fill="#ffa500" />
<rect x="509" y="664" width="400" height="2" fill="#ffa500" />
<rect x="510" y="509" width="3" height="1" fill="#ffa500" />
<polyline points="510.0,622.4 510.4,594.6 510.9,606.7 511.3,601.7 511.7,596.4 512.1,599.0 512.6,599.4 513.0,603.0 513.4,607.1 513.9,612.4 514.3,605.5 514.7,613.0 515.2,607.3 515.6,604.3 516.0,601.5 516.4,595.0 516.9,589.8 517.3,602.5 517.7,628.0 518.2,628.0 518.6,605.9 519.0,592.4 519.4,597.0 519.9,593.5 520.3,611.4 520.7,601.9 521.2,603.9 521.6,595.2 522.0,592.1 522.4,597.9 522.9,601.9 523.3,606.6 523.7,589.9 524.2,605.4 524.6,595.4 525.0,598.2 525.5,599.8 525.9,598.9 526.3,606.4 526.7,609.8 527.2,605.3 527.6,597.9 528.0,605.9 528.5,605.5 528.9,609.6 529.3,604.6 529.7,588.8 530.2,595.9 530.6,598.9 531.0,610.0 531.5,601.1 531.9,609.8 532.3,604.6 532.7,592.2 533.2,602.5 533.6,606.7 534.0,605.5 534.5,589.6 534.9,605.6 535.3,632.0 535.8,632.0 536.2,597.2 536.6,585.4 537.0,591.2 537.5,614.0 537.9,622.5 538.3,610.7 538.8,605.5 539.2,617.7 539.6,604.6 540.0,593.5 540.5,581.2 540.9,609.3 541.3,582.8 541.8,577.7 542.2,596.1 542.6,561.7 543.1,561.7 543.5,610.3 543.9,600.8 544.3,603.3 544.8,605.3 545.2,592.6 545.6,599.2 546.1,617.1 546.5,589.5 546.9,598.8 547.3,601.8 547.8,592.8 548.2,597.0 548.6,582.9 549.1,593.6 549.5,597.7 549.9,606.7 550.3,605.3 550.8,592.4 551.2,587.9 551.6,612.7 552.1,604.7 552.5,581.0 552.9,594.3 553.4,589.5 553.8,592.0 554.2,582.6 554.6,593.5 555.1,592.7 555.5,595.0 555.9,605.8 556.4,598.9 556.8,586.7 557.2,582.3 557.6,592.5 558.1,606.7 558.5,604.9 558.9,591.9 559.4,606.7 559.8,575.0 560.2,575.0 560.6,600.5 561.1,596.2 561.5,587.3 561.9,593.1 562.4,598.1 562.8,608.0 563.2,587.9 563.7,598.7 564.1,596.9 564.5,596.3 564.9,586.3 565.4,607.4 565.8,607.7 566.2,610.2 566.7,600.6 567.1,609.2 567.5,601.1 567.9,605.0 568.4,593.7 568.8,598.4 569.2,593.7 569.7,587.5 570.1,592.7 570.5,586.9 571.0,586.9 571.4,593.1 571.8,591.2 572.2,614.0 572.7,611.4 573.1,605.5 573.5,603.0 574.0,588.9 574.4,548.0 574.8,583.9 575.2,590.8 575.7,592.1 576.1,593.0 576.5,603.5 577.0,589.4 577.4,616.7 577.8,591.7 578.2,603.3 578.7,582.5 579.1,603.8 579.5,585.5 580.0,597.7 580.4,595.9 580.8,603.0 581.3,601.1 581.7,599.2 582.1,594.6 582.5,612.6 583.0,591.9 583.4,595.9 583.8,591.7 584.3,596.9 584.7,587.5 585.1,592.2 585.5,600.0 586.0,590.7 586.4,599.6 586.8,590.6 587.3,607.7 587.7,594.4 588.1,610.6 588.5,599.8 589.0,594.4 589.4,603.6 589.8,605.4 590.3,608.5 590.7,607.3 591.1,603.0 591.6,585.3 592.0,603.3 592.4,594.5 592.8,598.8 593.3,606.1 593.7,541.0 594.1,541.0 594.6,615.7 595.0,599.9 595.4,592.5 595.8,606.9 596.3,596.7 596.7,604.1 597.1,605.8 597.6,582.1 598.0,597.8 598.4,581.9 598.9,588.9 599.3,600.1 599.7,584.7 600.1,588.7 600.6,590.9 601.0,597.5 601.4,597.8 601.9,598.5 602.3,590.4 602.7,588.3 603.1,598.2 603.6,587.2 604.0,587.7 604.4,600.6 604.9,587.7 605.3,586.8 605.7,641.0 606.1,594.1 606.6,575.3 607.0,587.9 607.4,611.1 607.9,618.6 608.3,591.8 608.7,551.0 609.2,600.6 609.6,596.9 610.0,578.7 610.4,602.7 610.9,596.5 611.3,592.1 611.7,580.3 612.2,588.7 612.6,593.1 613.0,591.9 613.4,595.9 613.9,590.7 614.3,602.5 614.7,599.3 615.2,584.0 615.6,588.7 616.0,597.4 616.4,589.1 616.9,605.7 617.3,589.2 617.7,595.8 618.2,598.9 618.6,584.0 619.0,604.3 619.5,591.8 619.9,587.5 620.3,587.7 620.7,579.1 621.2,581.9 621.6,606.3 622.0,592.4 622.5,591.0 622.9,595.1 623.3,598.3 623.7,586.6 624.2,591.6 624.6,595.7 625.0,601.9 625.5,595.4 625.9,607.4 626.3,591.4 626.8,590.3 627.2,581.3 627.6,592.8 628.0,598.6 628.5,591.0 628.9,591.6 629.3,558.0 629.8,588.0 630.2,589.2 630.6,592.2 631.0,602.1 631.5,597.3 631.9,600.7 632.3,602.9 632.8,588.9 633.2,604.2 633.6,636.0 634.0,636.0 634.5,587.6 634.9,592.0 635.3,579.6 635.8,612.3 636.2,592.2 636.6,599.9 637.1,582.3 637.5,593.4 637.9,538.0 638.3,586.1 638.8,594.7 639.2,592.5 639.6,595.6 640.1,582.2 640.5,596.8 640.9,589.9 641.3,585.1 641.8,573.6 642.2,590.7 642.6,589.1 643.1,612.4 643.5,581.9 643.9,604.9 644.3,602.8 644.8,595.7 645.2,594.2 645.6,596.4 646.1,579.5 646.5,604.1 646.9,589.3 647.4,585.7 647.8,591.9 648.2,568.6 648.6,580.6 649.1,581.9 649.5,540.0 649.9,596.8 650.4,605.4 650.8,591.9 651.2,589.0 651.6,594.5 652.1,587.4 652.5,592.8 652.9,595.1 653.4,589.7 653.8,588.1 654.2,592.1 654.7,592.0 655.1,597.3 655.5,578.6 655.9,581.9 656.4,587.3 656.8,595.5 657.2,580.4 657.7,601.6 658.1,603.5 658.5,585.0 658.9,600.7 659.4,573.4 659.8,590.3 660.2,577.4 660.7,600.3 661.1,598.3 661.5,595.4 661.9,586.0 662.4,581.4 662.8,594.5 663.2,586.5 663.7,596.6 664.1,577.2 664.5,594.4 665.0,565.0 665.4,571.4 665.8,579.9 666.2,584.6 666.7,585.5 667.1,575.9 667.5,590.7 668.0,580.9 668.4,589.8 668.8,574.8 669.2,580.3 669.7,596.3 670.1,575.8 670.5,590.0 671.0,602.6 671.4,597.1 671.8,579.0 672.2,609.1 672.7,585.4 673.1,598.1 673.5,598.3 674.0,587.4 674.4,595.4 674.8,566.6 675.3,590.8 675.7,591.3 676.1,587.0 676.5,591.0 677.0,599.0 677.4,597.9 677.8,584.5 678.3,596.5 678.7,599.8 679.1,590.7 679.5,593.1 680.0,568.9 680.4,576.3 680.8,592.9 681.3,576.9 681.7,596.8 682.1,599.5 682.6,581.2 683.0,579.6 683.4,587.8 683.8,591.4 684.3,532.0 684.7,587.5 685.1,589.7 685.6,580.9 686.0,591.7 686.4,582.7 686.8,597.8 687.3,595.2 687.7,575.3 688.1,592.1 688.6,579.8 689.0,597.3 689.4,580.3 689.8,599.8 690.3,598.1 690.7,605.6 691.1,591.8 691.6,589.4 692.0,599.3 692.4,578.5 692.9,571.0 693.3,586.2 693.7,588.3 694.1,575.3 694.6,574.5 695.0,574.2 695.4,601.2 695.9,585.8 696.3,594.0 696.7,587.6 697.1,586.6 697.6,599.6 698.0,568.9 698.4,586.7 698.9,581.8 699.3,580.7 699.7,625.0 700.1,625.0 700.6,578.2 701.0,597.7 701.4,582.5 701.9,584.4 702.3,586.8 702.7,593.6 703.2,597.1 703.6,589.9 704.0,588.2 704.4,592.6 704.9,581.4 705.3,590.0 705.7,602.5 706.2,582.6 706.6,580.8 707.0,575.0 707.4,588.5 707.9,525.0 708.3,584.4 708.7,585.2 709.2,597.9 709.6,588.2 710.0,593.8 710.5,584.8 710.9,598.9 711.3,595.6 711.7,586.6 712.2,582.8 712.6,609.3 713.0,578.7 713.5,579.6 713.9,566.6 714.3,593.5 714.7,588.2 715.2,587.0 715.6,568.0 716.0,587.8 716.5,581.0 716.9,577.7 717.3,585.6 717.7,590.2 718.2,586.3 718.6,583.3 719.0,593.7 719.5,589.6 719.9,584.4 720.3,592.3 720.8,590.0 721.2,595.2 721.6,594.4 722.0,593.6 722.5,582.4 722.9,598.5 723.3,595.8 723.8,582.8 724.2,597.8 724.6,588.1 725.0,578.8 725.5,586.9 725.9,576.4 726.3,596.7 726.8,576.5 727.2,599.5 727.6,579.8 728.0,586.0 728.5,597.9 728.9,590.0 729.3,573.2 729.8,620.0 730.2,620.0 730.6,592.7 731.1,578.4 731.5,586.2 731.9,585.8 732.3,574.2 732.8,589.7 733.2,601.9 733.6,579.2 734.1,530.0 734.5,530.0 734.9,597.0 735.3,579.4 735.8,588.4 736.2,589.8 736.6,595.6 737.1,579.8 737.5,607.4 737.9,603.8 738.4,575.2 738.8,579.9 739.2,589.7 739.6,581.2 740.1,582.2 740.5,586.6 740.9,580.4 741.4,581.4 741.8,588.3 742.2,583.1 742.6,589.5 743.1,595.3 743.5,595.8 743.9,587.2 744.4,603.7 744.8,583.1 745.2,593.9 745.6,601.6 746.1,588.0 746.5,593.2 746.9,553.0 747.4,581.5 747.8,588.0 748.2,590.3 748.7,589.3 749.1,591.8 749.5,588.9 749.9,585.5 750.4,581.1 750.8,585.3 751.2,586.6 751.7,586.1 752.1,577.1 752.5,596.7 752.9,595.3 753.4,588.0 753.8,582.1 754.2,595.3 754.7,584.1 755.1,573.0 755.5,591.0 755.9,581.4 756.4,587.1 756.8,581.9 757.2,591.0 757.7,589.5 758.1,591.9 758.5,589.6 759.0,588.6 759.4,589.1 759.8,624.0 760.2,624.0 760.7,576.1 761.1,586.4 761.5,587.1 762.0,583.7 762.4,598.2 762.8,589.6 763.2,596.2 763.7,586.5 764.1,574.3 764.5,574.3 765.0,594.6 765.4,586.0 765.8,581.6 766.3,596.2 766.7,599.8 767.1,588.8 767.5,596.2 768.0,582.9 768.4,577.7 768.8,571.8 769.3,594.5 769.7,572.6 770.1,582.1 770.5,586.0 771.0,590.2 771.4,569.9 771.8,583.4 772.3,578.5 772.7,597.3 773.1,583.7 773.5,579.8 774.0,599.3 774.4,586.5 774.8,591.7 775.3,587.8 775.7,583.8 776.1,591.2 776.6,579.1 777.0,573.6 777.4,579.6 777.8,590.2 778.3,581.8 778.7,593.7 779.1,590.8 779.6,586.6 780.0,594.0 780.4,588.0 780.8,587.5 781.3,582.6 781.7,583.9 782.1,584.2 782.6,593.4 783.0,597.7 783.4,593.6 783.8,586.7 784.3,583.7 784.7,586.7 785.1,579.9 785.6,584.5 786.0,581.8 786.4,584.2 786.9,527.0 787.3,527.0 787.7,589.8 788.1,575.6 788.6,548.0 789.0,548.0" fill="none" stroke="#f0e800" stroke-width="1.15"/>
<text x="561" y="680" font-family="Liberation Mono" font-size="13.33" fill="#00ff00" text-anchor="start" stroke="#000" stroke-width="0.25">Center(MHz):98.7721,Bw(MHz):2</text>
</g>
<rect x="790" y="482" width="19" height="218" fill="#f0f0f0" />
<path d="M795.0 495.5 L799.5 490.5 L804.0 495.5" fill="none" stroke="#a3a3a3" stroke-width="1.4"/>
<path d="M795.0 686.5 L799.5 691.5 L804.0 686.5" fill="none" stroke="#a3a3a3" stroke-width="1.4"/>
<rect x="789" y="482" width="1" height="219" fill="#ffffff" />
<rect x="13" y="700" width="776" height="1" fill="#ffffff" />
<rect x="13" y="701" width="776" height="19" fill="#f0f0f0" />
<path d="M26.5 706.0 L21.5 710.5 L26.5 715.0" fill="none" stroke="#606060" stroke-width="2"/>
<path d="M775.5 706.0 L780.5 710.5 L775.5 715.0" fill="none" stroke="#606060" stroke-width="2"/>
<rect x="34" y="702" width="129" height="17" fill="#cdcdcd" />
<rect x="790" y="701" width="19" height="19" fill="#f0f0f0" />
<rect x="818" y="39" width="803" height="685" fill="#ffffff" />
<clipPath id="rclip"><rect x="819" y="40" width="801" height="683"/></clipPath>
<g clip-path="url(#rclip)">
<rect x="819" y="40" width="801" height="683" fill="url(#rdg)" />
<line x1="819" y1="381.5" x2="1219.5" y2="381.5" stroke="#c0c4c0" stroke-width="1" />
<line x1="1219.5" y1="381.5" x2="1620" y2="381.5" stroke="#8c968c" stroke-width="1" />
<line x1="1219.5" y1="40" x2="1219.5" y2="723" stroke="#8c968c" stroke-width="1" />
<line x1="809.5" y1="379.0" x2="809.5" y2="384.0" stroke="#c0c4c0" stroke-width="1" />
<line x1="1217.0" y1="-28.5" x2="1222.0" y2="-28.5" stroke="#8c968c" stroke-width="1" />
<line x1="819.5" y1="376.0" x2="819.5" y2="387.0" stroke="#c0c4c0" stroke-width="1" />
<line x1="1214.0" y1="-18.5" x2="1225.0" y2="-18.5" stroke="#8c968c" stroke-width="1" />
<line x1="829.5" y1="379.0" x2="829.5" y2="384.0" stroke="#c0c4c0" stroke-width="1" />
<line x1="1217.0" y1="-8.5" x2="1222.0" y2="-8.5" stroke="#8c968c" stroke-width="1" />
<line x1="839.5" y1="379.0" x2="839.5" y2="384.0" stroke="#c0c4c0" stroke-width="1" />
<line x1="1217.0" y1="1.5" x2="1222.0" y2="1.5" stroke="#8c968c" stroke-width="1" />
<line x1="849.5" y1="379.0" x2="849.5" y2="384.0" stroke="#c0c4c0" stroke-width="1" />
<line x1="1217.0" y1="11.5" x2="1222.0" y2="11.5" stroke="#8c968c" stroke-width="1" />
<line x1="859.5" y1="379.0" x2="859.5" y2="384.0" stroke="#c0c4c0" stroke-width="1" />
<line x1="1217.0" y1="21.5" x2="1222.0" y2="21.5" stroke="#8c968c" stroke-width="1" />
<line x1="869.5" y1="376.0" x2="869.5" y2="387.0" stroke="#c0c4c0" stroke-width="1" />
<line x1="1214.0" y1="31.5" x2="1225.0" y2="31.5" stroke="#8c968c" stroke-width="1" />
<line x1="879.5" y1="379.0" x2="879.5" y2="384.0" stroke="#c0c4c0" stroke-width="1" />
<line x1="1217.0" y1="41.5" x2="1222.0" y2="41.5" stroke="#8c968c" stroke-width="1" />
<line x1="889.5" y1="379.0" x2="889.5" y2="384.0" stroke="#c0c4c0" stroke-width="1" />
<line x1="1217.0" y1="51.5" x2="1222.0" y2="51.5" stroke="#8c968c" stroke-width="1" />
<line x1="899.5" y1="379.0" x2="899.5" y2="384.0" stroke="#c0c4c0" stroke-width="1" />
<line x1="1217.0" y1="61.5" x2="1222.0" y2="61.5" stroke="#8c968c" stroke-width="1" />
<line x1="909.5" y1="379.0" x2="909.5" y2="384.0" stroke="#c0c4c0" stroke-width="1" />
<line x1="1217.0" y1="71.5" x2="1222.0" y2="71.5" stroke="#8c968c" stroke-width="1" />
<line x1="919.5" y1="376.0" x2="919.5" y2="387.0" stroke="#c0c4c0" stroke-width="1" />
<line x1="1214.0" y1="81.5" x2="1225.0" y2="81.5" stroke="#8c968c" stroke-width="1" />
<line x1="929.5" y1="379.0" x2="929.5" y2="384.0" stroke="#c0c4c0" stroke-width="1" />
<line x1="1217.0" y1="91.5" x2="1222.0" y2="91.5" stroke="#8c968c" stroke-width="1" />
<line x1="939.5" y1="379.0" x2="939.5" y2="384.0" stroke="#c0c4c0" stroke-width="1" />
<line x1="1217.0" y1="101.5" x2="1222.0" y2="101.5" stroke="#8c968c" stroke-width="1" />
<line x1="949.5" y1="379.0" x2="949.5" y2="384.0" stroke="#c0c4c0" stroke-width="1" />
<line x1="1217.0" y1="111.5" x2="1222.0" y2="111.5" stroke="#8c968c" stroke-width="1" />
<line x1="959.5" y1="379.0" x2="959.5" y2="384.0" stroke="#c0c4c0" stroke-width="1" />
<line x1="1217.0" y1="121.5" x2="1222.0" y2="121.5" stroke="#8c968c" stroke-width="1" />
<line x1="969.5" y1="376.0" x2="969.5" y2="387.0" stroke="#c0c4c0" stroke-width="1" />
<line x1="1214.0" y1="131.5" x2="1225.0" y2="131.5" stroke="#8c968c" stroke-width="1" />
<line x1="979.5" y1="379.0" x2="979.5" y2="384.0" stroke="#c0c4c0" stroke-width="1" />
<line x1="1217.0" y1="141.5" x2="1222.0" y2="141.5" stroke="#8c968c" stroke-width="1" />
<line x1="989.5" y1="379.0" x2="989.5" y2="384.0" stroke="#c0c4c0" stroke-width="1" />
<line x1="1217.0" y1="151.5" x2="1222.0" y2="151.5" stroke="#8c968c" stroke-width="1" />
<line x1="999.5" y1="379.0" x2="999.5" y2="384.0" stroke="#c0c4c0" stroke-width="1" />
<line x1="1217.0" y1="161.5" x2="1222.0" y2="161.5" stroke="#8c968c" stroke-width="1" />
<line x1="1009.5" y1="379.0" x2="1009.5" y2="384.0" stroke="#c0c4c0" stroke-width="1" />
<line x1="1217.0" y1="171.5" x2="1222.0" y2="171.5" stroke="#8c968c" stroke-width="1" />
<line x1="1019.5" y1="376.0" x2="1019.5" y2="387.0" stroke="#c0c4c0" stroke-width="1" />
<line x1="1214.0" y1="181.5" x2="1225.0" y2="181.5" stroke="#8c968c" stroke-width="1" />
<line x1="1029.5" y1="379.0" x2="1029.5" y2="384.0" stroke="#c0c4c0" stroke-width="1" />
<line x1="1217.0" y1="191.5" x2="1222.0" y2="191.5" stroke="#8c968c" stroke-width="1" />
<line x1="1039.5" y1="379.0" x2="1039.5" y2="384.0" stroke="#c0c4c0" stroke-width="1" />
<line x1="1217.0" y1="201.5" x2="1222.0" y2="201.5" stroke="#8c968c" stroke-width="1" />
<line x1="1049.5" y1="379.0" x2="1049.5" y2="384.0" stroke="#c0c4c0" stroke-width="1" />
<line x1="1217.0" y1="211.5" x2="1222.0" y2="211.5" stroke="#8c968c" stroke-width="1" />
<line x1="1059.5" y1="379.0" x2="1059.5" y2="384.0" stroke="#c0c4c0" stroke-width="1" />
<line x1="1217.0" y1="221.5" x2="1222.0" y2="221.5" stroke="#8c968c" stroke-width="1" />
<line x1="1069.5" y1="376.0" x2="1069.5" y2="387.0" stroke="#c0c4c0" stroke-width="1" />
<line x1="1214.0" y1="231.5" x2="1225.0" y2="231.5" stroke="#8c968c" stroke-width="1" />
<line x1="1079.5" y1="379.0" x2="1079.5" y2="384.0" stroke="#c0c4c0" stroke-width="1" />
<line x1="1217.0" y1="241.5" x2="1222.0" y2="241.5" stroke="#8c968c" stroke-width="1" />
<line x1="1089.5" y1="379.0" x2="1089.5" y2="384.0" stroke="#c0c4c0" stroke-width="1" />
<line x1="1217.0" y1="251.5" x2="1222.0" y2="251.5" stroke="#8c968c" stroke-width="1" />
<line x1="1099.5" y1="379.0" x2="1099.5" y2="384.0" stroke="#c0c4c0" stroke-width="1" />
<line x1="1217.0" y1="261.5" x2="1222.0" y2="261.5" stroke="#8c968c" stroke-width="1" />
<line x1="1109.5" y1="379.0" x2="1109.5" y2="384.0" stroke="#c0c4c0" stroke-width="1" />
<line x1="1217.0" y1="271.5" x2="1222.0" y2="271.5" stroke="#8c968c" stroke-width="1" />
<line x1="1119.5" y1="376.0" x2="1119.5" y2="387.0" stroke="#c0c4c0" stroke-width="1" />
<line x1="1214.0" y1="281.5" x2="1225.0" y2="281.5" stroke="#8c968c" stroke-width="1" />
<line x1="1129.5" y1="379.0" x2="1129.5" y2="384.0" stroke="#c0c4c0" stroke-width="1" />
<line x1="1217.0" y1="291.5" x2="1222.0" y2="291.5" stroke="#8c968c" stroke-width="1" />
<line x1="1139.5" y1="379.0" x2="1139.5" y2="384.0" stroke="#c0c4c0" stroke-width="1" />
<line x1="1217.0" y1="301.5" x2="1222.0" y2="301.5" stroke="#8c968c" stroke-width="1" />
<line x1="1149.5" y1="379.0" x2="1149.5" y2="384.0" stroke="#c0c4c0" stroke-width="1" />
<line x1="1217.0" y1="311.5" x2="1222.0" y2="311.5" stroke="#8c968c" stroke-width="1" />
<line x1="1159.5" y1="379.0" x2="1159.5" y2="384.0" stroke="#c0c4c0" stroke-width="1" />
<line x1="1217.0" y1="321.5" x2="1222.0" y2="321.5" stroke="#8c968c" stroke-width="1" />
<line x1="1169.5" y1="376.0" x2="1169.5" y2="387.0" stroke="#c0c4c0" stroke-width="1" />
<line x1="1214.0" y1="331.5" x2="1225.0" y2="331.5" stroke="#8c968c" stroke-width="1" />
<line x1="1179.5" y1="379.0" x2="1179.5" y2="384.0" stroke="#c0c4c0" stroke-width="1" />
<line x1="1217.0" y1="341.5" x2="1222.0" y2="341.5" stroke="#8c968c" stroke-width="1" />
<line x1="1189.5" y1="379.0" x2="1189.5" y2="384.0" stroke="#c0c4c0" stroke-width="1" />
<line x1="1217.0" y1="351.5" x2="1222.0" y2="351.5" stroke="#8c968c" stroke-width="1" />
<line x1="1199.5" y1="379.0" x2="1199.5" y2="384.0" stroke="#c0c4c0" stroke-width="1" />
<line x1="1217.0" y1="361.5" x2="1222.0" y2="361.5" stroke="#8c968c" stroke-width="1" />
<line x1="1209.5" y1="379.0" x2="1209.5" y2="384.0" stroke="#c0c4c0" stroke-width="1" />
<line x1="1217.0" y1="371.5" x2="1222.0" y2="371.5" stroke="#8c968c" stroke-width="1" />
<line x1="1229.5" y1="379.0" x2="1229.5" y2="384.0" stroke="#8c968c" stroke-width="1" />
<line x1="1217.0" y1="391.5" x2="1222.0" y2="391.5" stroke="#8c968c" stroke-width="1" />
<line x1="1239.5" y1="379.0" x2="1239.5" y2="384.0" stroke="#8c968c" stroke-width="1" />
<line x1="1217.0" y1="401.5" x2="1222.0" y2="401.5" stroke="#8c968c" stroke-width="1" />
<line x1="1249.5" y1="379.0" x2="1249.5" y2="384.0" stroke="#8c968c" stroke-width="1" />
<line x1="1217.0" y1="411.5" x2="1222.0" y2="411.5" stroke="#8c968c" stroke-width="1" />
<line x1="1259.5" y1="379.0" x2="1259.5" y2="384.0" stroke="#8c968c" stroke-width="1" />
<line x1="1217.0" y1="421.5" x2="1222.0" y2="421.5" stroke="#8c968c" stroke-width="1" />
<line x1="1269.5" y1="376.0" x2="1269.5" y2="387.0" stroke="#8c968c" stroke-width="1" />
<line x1="1214.0" y1="431.5" x2="1225.0" y2="431.5" stroke="#8c968c" stroke-width="1" />
<line x1="1279.5" y1="379.0" x2="1279.5" y2="384.0" stroke="#8c968c" stroke-width="1" />
<line x1="1217.0" y1="441.5" x2="1222.0" y2="441.5" stroke="#8c968c" stroke-width="1" />
<line x1="1289.5" y1="379.0" x2="1289.5" y2="384.0" stroke="#8c968c" stroke-width="1" />
<line x1="1217.0" y1="451.5" x2="1222.0" y2="451.5" stroke="#8c968c" stroke-width="1" />
<line x1="1299.5" y1="379.0" x2="1299.5" y2="384.0" stroke="#8c968c" stroke-width="1" />
<line x1="1217.0" y1="461.5" x2="1222.0" y2="461.5" stroke="#8c968c" stroke-width="1" />
<line x1="1309.5" y1="379.0" x2="1309.5" y2="384.0" stroke="#8c968c" stroke-width="1" />
<line x1="1217.0" y1="471.5" x2="1222.0" y2="471.5" stroke="#8c968c" stroke-width="1" />
<line x1="1319.5" y1="376.0" x2="1319.5" y2="387.0" stroke="#8c968c" stroke-width="1" />
<line x1="1214.0" y1="481.5" x2="1225.0" y2="481.5" stroke="#8c968c" stroke-width="1" />
<line x1="1329.5" y1="379.0" x2="1329.5" y2="384.0" stroke="#8c968c" stroke-width="1" />
<line x1="1217.0" y1="491.5" x2="1222.0" y2="491.5" stroke="#8c968c" stroke-width="1" />
<line x1="1339.5" y1="379.0" x2="1339.5" y2="384.0" stroke="#8c968c" stroke-width="1" />
<line x1="1217.0" y1="501.5" x2="1222.0" y2="501.5" stroke="#8c968c" stroke-width="1" />
<line x1="1349.5" y1="379.0" x2="1349.5" y2="384.0" stroke="#8c968c" stroke-width="1" />
<line x1="1217.0" y1="511.5" x2="1222.0" y2="511.5" stroke="#8c968c" stroke-width="1" />
<line x1="1359.5" y1="379.0" x2="1359.5" y2="384.0" stroke="#8c968c" stroke-width="1" />
<line x1="1217.0" y1="521.5" x2="1222.0" y2="521.5" stroke="#8c968c" stroke-width="1" />
<line x1="1369.5" y1="376.0" x2="1369.5" y2="387.0" stroke="#8c968c" stroke-width="1" />
<line x1="1214.0" y1="531.5" x2="1225.0" y2="531.5" stroke="#8c968c" stroke-width="1" />
<line x1="1379.5" y1="379.0" x2="1379.5" y2="384.0" stroke="#8c968c" stroke-width="1" />
<line x1="1217.0" y1="541.5" x2="1222.0" y2="541.5" stroke="#8c968c" stroke-width="1" />
<line x1="1389.5" y1="379.0" x2="1389.5" y2="384.0" stroke="#8c968c" stroke-width="1" />
<line x1="1217.0" y1="551.5" x2="1222.0" y2="551.5" stroke="#8c968c" stroke-width="1" />
<line x1="1399.5" y1="379.0" x2="1399.5" y2="384.0" stroke="#8c968c" stroke-width="1" />
<line x1="1217.0" y1="561.5" x2="1222.0" y2="561.5" stroke="#8c968c" stroke-width="1" />
<line x1="1409.5" y1="379.0" x2="1409.5" y2="384.0" stroke="#8c968c" stroke-width="1" />
<line x1="1217.0" y1="571.5" x2="1222.0" y2="571.5" stroke="#8c968c" stroke-width="1" />
<line x1="1419.5" y1="376.0" x2="1419.5" y2="387.0" stroke="#8c968c" stroke-width="1" />
<line x1="1214.0" y1="581.5" x2="1225.0" y2="581.5" stroke="#8c968c" stroke-width="1" />
<line x1="1429.5" y1="379.0" x2="1429.5" y2="384.0" stroke="#8c968c" stroke-width="1" />
<line x1="1217.0" y1="591.5" x2="1222.0" y2="591.5" stroke="#8c968c" stroke-width="1" />
<line x1="1439.5" y1="379.0" x2="1439.5" y2="384.0" stroke="#8c968c" stroke-width="1" />
<line x1="1217.0" y1="601.5" x2="1222.0" y2="601.5" stroke="#8c968c" stroke-width="1" />
<line x1="1449.5" y1="379.0" x2="1449.5" y2="384.0" stroke="#8c968c" stroke-width="1" />
<line x1="1217.0" y1="611.5" x2="1222.0" y2="611.5" stroke="#8c968c" stroke-width="1" />
<line x1="1459.5" y1="379.0" x2="1459.5" y2="384.0" stroke="#8c968c" stroke-width="1" />
<line x1="1217.0" y1="621.5" x2="1222.0" y2="621.5" stroke="#8c968c" stroke-width="1" />
<line x1="1469.5" y1="376.0" x2="1469.5" y2="387.0" stroke="#8c968c" stroke-width="1" />
<line x1="1214.0" y1="631.5" x2="1225.0" y2="631.5" stroke="#8c968c" stroke-width="1" />
<line x1="1479.5" y1="379.0" x2="1479.5" y2="384.0" stroke="#8c968c" stroke-width="1" />
<line x1="1217.0" y1="641.5" x2="1222.0" y2="641.5" stroke="#8c968c" stroke-width="1" />
<line x1="1489.5" y1="379.0" x2="1489.5" y2="384.0" stroke="#8c968c" stroke-width="1" />
<line x1="1217.0" y1="651.5" x2="1222.0" y2="651.5" stroke="#8c968c" stroke-width="1" />
<line x1="1499.5" y1="379.0" x2="1499.5" y2="384.0" stroke="#8c968c" stroke-width="1" />
<line x1="1217.0" y1="661.5" x2="1222.0" y2="661.5" stroke="#8c968c" stroke-width="1" />
<line x1="1509.5" y1="379.0" x2="1509.5" y2="384.0" stroke="#8c968c" stroke-width="1" />
<line x1="1217.0" y1="671.5" x2="1222.0" y2="671.5" stroke="#8c968c" stroke-width="1" />
<line x1="1519.5" y1="376.0" x2="1519.5" y2="387.0" stroke="#8c968c" stroke-width="1" />
<line x1="1214.0" y1="681.5" x2="1225.0" y2="681.5" stroke="#8c968c" stroke-width="1" />
<line x1="1529.5" y1="379.0" x2="1529.5" y2="384.0" stroke="#8c968c" stroke-width="1" />
<line x1="1217.0" y1="691.5" x2="1222.0" y2="691.5" stroke="#8c968c" stroke-width="1" />
<line x1="1539.5" y1="379.0" x2="1539.5" y2="384.0" stroke="#8c968c" stroke-width="1" />
<line x1="1217.0" y1="701.5" x2="1222.0" y2="701.5" stroke="#8c968c" stroke-width="1" />
<line x1="1549.5" y1="379.0" x2="1549.5" y2="384.0" stroke="#8c968c" stroke-width="1" />
<line x1="1217.0" y1="711.5" x2="1222.0" y2="711.5" stroke="#8c968c" stroke-width="1" />
<line x1="1559.5" y1="379.0" x2="1559.5" y2="384.0" stroke="#8c968c" stroke-width="1" />
<line x1="1217.0" y1="721.5" x2="1222.0" y2="721.5" stroke="#8c968c" stroke-width="1" />
<line x1="1569.5" y1="376.0" x2="1569.5" y2="387.0" stroke="#8c968c" stroke-width="1" />
<line x1="1214.0" y1="731.5" x2="1225.0" y2="731.5" stroke="#8c968c" stroke-width="1" />
<line x1="1579.5" y1="379.0" x2="1579.5" y2="384.0" stroke="#8c968c" stroke-width="1" />
<line x1="1217.0" y1="741.5" x2="1222.0" y2="741.5" stroke="#8c968c" stroke-width="1" />
<line x1="1589.5" y1="379.0" x2="1589.5" y2="384.0" stroke="#8c968c" stroke-width="1" />
<line x1="1217.0" y1="751.5" x2="1222.0" y2="751.5" stroke="#8c968c" stroke-width="1" />
<line x1="1599.5" y1="379.0" x2="1599.5" y2="384.0" stroke="#8c968c" stroke-width="1" />
<line x1="1217.0" y1="761.5" x2="1222.0" y2="761.5" stroke="#8c968c" stroke-width="1" />
<line x1="1609.5" y1="379.0" x2="1609.5" y2="384.0" stroke="#8c968c" stroke-width="1" />
<line x1="1217.0" y1="771.5" x2="1222.0" y2="771.5" stroke="#8c968c" stroke-width="1" />
<line x1="1619.5" y1="376.0" x2="1619.5" y2="387.0" stroke="#8c968c" stroke-width="1" />
<line x1="1214.0" y1="781.5" x2="1225.0" y2="781.5" stroke="#8c968c" stroke-width="1" />
<line x1="1629.5" y1="379.0" x2="1629.5" y2="384.0" stroke="#8c968c" stroke-width="1" />
<line x1="1217.0" y1="791.5" x2="1222.0" y2="791.5" stroke="#8c968c" stroke-width="1" />
<text x="1165.0" y="395.5" font-family="Liberation Sans" font-size="17.5" fill="#7f847f" text-anchor="start" >0.3</text>
<text x="1265.0" y="395.5" font-family="Liberation Sans" font-size="17.5" fill="#7f847f" text-anchor="start" >0.3</text>
<text x="1115.0" y="395.5" font-family="Liberation Sans" font-size="17.5" fill="#7f847f" text-anchor="start" >0.6</text>
<text x="1315.0" y="395.5" font-family="Liberation Sans" font-size="17.5" fill="#7f847f" text-anchor="start" >0.6</text>
<text x="1065.0" y="395.5" font-family="Liberation Sans" font-size="17.5" fill="#7f847f" text-anchor="start" >0.9</text>
<text x="1365.0" y="395.5" font-family="Liberation Sans" font-size="17.5" fill="#7f847f" text-anchor="start" >0.9</text>
<text x="1015.0" y="395.5" font-family="Liberation Sans" font-size="17.5" fill="#7f847f" text-anchor="start" >1.2</text>
<text x="1415.0" y="395.5" font-family="Liberation Sans" font-size="17.5" fill="#7f847f" text-anchor="start" >1.2</text>
<text x="965.0" y="395.5" font-family="Liberation Sans" font-size="17.5" fill="#7f847f" text-anchor="start" >1.5</text>
<text x="1465.0" y="395.5" font-family="Liberation Sans" font-size="17.5" fill="#7f847f" text-anchor="start" >1.5</text>
<text x="915.0" y="395.5" font-family="Liberation Sans" font-size="17.5" fill="#7f847f" text-anchor="start" >1.8</text>
<text x="1515.0" y="395.5" font-family="Liberation Sans" font-size="17.5" fill="#7f847f" text-anchor="start" >1.8</text>
<text x="865.0" y="395.5" font-family="Liberation Sans" font-size="17.5" fill="#7f847f" text-anchor="start" >2.1</text>
<text x="1565.0" y="395.5" font-family="Liberation Sans" font-size="17.5" fill="#7f847f" text-anchor="start" >2.1</text>
<text x="815.0" y="395.5" font-family="Liberation Sans" font-size="17.5" fill="#7f847f" text-anchor="start" >2.4</text>
<text x="1615.0" y="395.5" font-family="Liberation Sans" font-size="17.5" fill="#7f847f" text-anchor="start" >2.4</text>
<text x="1229.5" y="336.0" font-family="Liberation Sans" font-size="17.5" fill="#7f847f" text-anchor="start" >0.3</text>
<text x="1229.5" y="436.0" font-family="Liberation Sans" font-size="17.5" fill="#7f847f" text-anchor="start" >0.3</text>
<text x="1229.5" y="286.0" font-family="Liberation Sans" font-size="17.5" fill="#7f847f" text-anchor="start" >0.6</text>
<text x="1229.5" y="486.0" font-family="Liberation Sans" font-size="17.5" fill="#7f847f" text-anchor="start" >0.6</text>
<text x="1229.5" y="236.0" font-family="Liberation Sans" font-size="17.5" fill="#7f847f" text-anchor="start" >0.9</text>
<text x="1229.5" y="536.0" font-family="Liberation Sans" font-size="17.5" fill="#7f847f" text-anchor="start" >0.9</text>
<text x="1229.5" y="186.0" font-family="Liberation Sans" font-size="17.5" fill="#7f847f" text-anchor="start" >1.2</text>
<text x="1229.5" y="586.0" font-family="Liberation Sans" font-size="17.5" fill="#7f847f" text-anchor="start" >1.2</text>
<text x="1229.5" y="136.0" font-family="Liberation Sans" font-size="17.5" fill="#7f847f" text-anchor="start" >1.5</text>
<text x="1229.5" y="636.0" font-family="Liberation Sans" font-size="17.5" fill="#7f847f" text-anchor="start" >1.5</text>
<text x="1229.5" y="86.0" font-family="Liberation Sans" font-size="17.5" fill="#7f847f" text-anchor="start" >1.8</text>
<text x="1229.5" y="686.0" font-family="Liberation Sans" font-size="17.5" fill="#7f847f" text-anchor="start" >1.8</text>
<circle cx="1219.5" cy="381.5" r="97.00" fill="none" stroke="#fa8072" stroke-width="2"/>
<circle cx="1219.5" cy="381.5" r="82.17" fill="none" stroke="#f0e68c" stroke-width="2"/>
<circle cx="1219.5" cy="381.5" r="136.00" fill="none" stroke="#ff00ff" stroke-width="2"/>
<circle cx="1219.5" cy="381.5" r="120.67" fill="none" stroke="#adff2f" stroke-width="2"/>
<circle cx="1219.5" cy="381.5" r="122.00" fill="none" stroke="#00bfff" stroke-width="2"/>
<circle cx="1219.5" cy="381.5" r="191.67" fill="none" stroke="#00ffff" stroke-width="2"/>
<circle cx="1219.5" cy="381.5" r="249.67" fill="none" stroke="#4169e1" stroke-width="2"/>
<circle cx="1219.5" cy="381.5" r="243.00" fill="none" stroke="#00ff7f" stroke-width="2"/>
<circle cx="1219.5" cy="381.5" r="2360.00" fill="none" stroke="#dda0dd" stroke-width="2"/>
<circle cx="1219.5" cy="381.5" r="4130.01" fill="none" stroke="#ff1493" stroke-width="2"/>
<use href="#drone" x="822" y="50" width="40" height="20"/>
<text x="861" y="65.7" font-family="Liberation Sans" font-size="17.7" fill="#ff1c8e" text-anchor="start" >61.70MHz,Dis:24.78km</text>
<use href="#drone" x="822" y="80" width="40" height="20"/>
<text x="861" y="95.7" font-family="Liberation Sans" font-size="17.7" fill="#dda0dd" text-anchor="start" >98.77MHz,Dis:14.16km</text>
<use href="#drone" x="822" y="110" width="40" height="20"/>
<text x="861" y="125.7" font-family="Liberation Sans" font-size="17.7" fill="#fa8072" text-anchor="start" >773.11MHz,Dis:0.58km</text>
<use href="#drone" x="822" y="140" width="40" height="20"/>
<text x="861" y="155.7" font-family="Liberation Sans" font-size="17.7" fill="#f0e68c" text-anchor="start" >874.83MHz,Dis:0.49km</text>
<use href="#drone" x="822" y="170" width="40" height="20"/>
<text x="861" y="185.7" font-family="Liberation Sans" font-size="17.7" fill="#ff00ff" text-anchor="start" >947.32MHz,Dis:0.81km</text>
<use href="#drone" x="822" y="200" width="40" height="20"/>
<text x="861" y="215.7" font-family="Liberation Sans" font-size="17.7" fill="#adff2f" text-anchor="start" >1815.28MHz,Dis:0.73km</text>
<use href="#drone" x="822" y="230" width="40" height="20"/>
<text x="861" y="245.7" font-family="Liberation Sans" font-size="17.7" fill="#00bfff" text-anchor="start" >1845.41MHz,Dis:0.73km</text>
<use href="#drone" x="822" y="260" width="40" height="20"/>
<text x="861" y="275.7" font-family="Liberation Sans" font-size="17.7" fill="#00ffff" text-anchor="start" >1870.38MHz,Dis:1.15km</text>
<use href="#drone" x="822" y="290" width="40" height="20"/>
<text x="861" y="305.7" font-family="Liberation Sans" font-size="17.7" fill="#4169e1" text-anchor="start" >2120.37MHz,Dis:1.49km</text>
<use href="#drone" x="822" y="320" width="40" height="20"/>
<text x="861" y="335.7" font-family="Liberation Sans" font-size="17.7" fill="#00ff7f" text-anchor="start" >2618.22MHz,Dis:1.46km</text>
<text x="1570" y="59.8" font-family="Liberation Sans" font-size="17.6" fill="#ffffff" text-anchor="start" >unit:km</text>
</g>
<rect x="1636" y="30" width="269" height="28" fill="#dadada" />
<rect x="1636" y="30" width="275" height="1" fill="#bababa" />
<rect x="1636" y="57" width="275" height="1" fill="#bababa" />
<rect x="1636" y="30" width="1" height="28" fill="#bababa" />
<rect x="1910" y="30" width="1" height="28" fill="#bababa" />
<text x="1641.5" y="51" font-family="Liberation Sans" font-size="17.9" fill="#000" text-anchor="start" >Setting</text>
<text x="1658.5" y="99" font-family="Liberation Sans" font-size="17.9" fill="#000" text-anchor="start" >Mode</text>
<rect x="1658" y="110" width="240" height="27" fill="#cccccc" />
<rect x="1658" y="110" width="240" height="1" fill="#bcbcbc" />
<rect x="1658" y="136" width="240" height="1" fill="#bcbcbc" />
<rect x="1658" y="110" width="1" height="27" fill="#bcbcbc" />
<rect x="1897" y="110" width="1" height="27" fill="#bcbcbc" />
<text x="1662" y="130" font-family="Liberation Sans" font-size="17.9" fill="#838383" text-anchor="start" >Sweep</text>
<path d="M1882 121 L1886.5 125.5 L1891 121" fill="none" stroke="#7a7a7a" stroke-width="1"/>
<text x="1658.5" y="161" font-family="Liberation Sans" font-size="17.9" fill="#000" text-anchor="start" >Start</text>
<rect x="1658" y="172" width="240" height="27" fill="#ffffff" />
<rect x="1658" y="172" width="240" height="1" fill="#7a7a7a" />
<rect x="1658" y="198" width="240" height="1" fill="#7a7a7a" />
<rect x="1658" y="172" width="1" height="27" fill="#7a7a7a" />
<rect x="1897" y="172" width="1" height="27" fill="#7a7a7a" />
<text x="1661.5" y="192" font-family="Liberation Sans" font-size="17.9" fill="#000" text-anchor="start" >20.000000 MHz</text>
<text x="1658.5" y="223" font-family="Liberation Sans" font-size="17.9" fill="#000" text-anchor="start" >Stop</text>
<rect x="1658" y="234" width="240" height="27" fill="#ffffff" />
<rect x="1658" y="234" width="240" height="1" fill="#7a7a7a" />
<rect x="1658" y="260" width="240" height="1" fill="#7a7a7a" />
<rect x="1658" y="234" width="1" height="27" fill="#7a7a7a" />
<rect x="1897" y="234" width="1" height="27" fill="#7a7a7a" />
<text x="1661.5" y="254" font-family="Liberation Sans" font-size="17.9" fill="#000" text-anchor="start" >6.000000000 GHz</text>
<text x="1658.5" y="285" font-family="Liberation Sans" font-size="17.9" fill="#000" text-anchor="start" >Ref Level(dBm)</text>
<rect x="1658" y="296" width="240" height="27" fill="#ffffff" />
<rect x="1658" y="296" width="240" height="1" fill="#0078d7" />
<rect x="1658" y="322" width="240" height="1" fill="#0078d7" />
<rect x="1658" y="296" width="1" height="27" fill="#0078d7" />
<rect x="1897" y="296" width="1" height="27" fill="#0078d7" />
<text x="1661.5" y="316" font-family="Liberation Sans" font-size="17.9" fill="#000" text-anchor="start" >-50</text>
<text x="1658.5" y="347" font-family="Liberation Sans" font-size="17.9" fill="#000" text-anchor="start" >Threshold</text>
<rect x="1658" y="358" width="240" height="27" fill="#ffffff" />
<rect x="1658" y="358" width="240" height="1" fill="#7a7a7a" />
<rect x="1658" y="384" width="240" height="1" fill="#7a7a7a" />
<rect x="1658" y="358" width="1" height="27" fill="#7a7a7a" />
<rect x="1897" y="358" width="1" height="27" fill="#7a7a7a" />
<text x="1661.5" y="378" font-family="Liberation Sans" font-size="17.9" fill="#000" text-anchor="start" >6</text>
<text x="1658.5" y="409" font-family="Liberation Sans" font-size="17.9" fill="#000" text-anchor="start" >Track Factor</text>
<rect x="1658" y="420" width="240" height="27" fill="#ffffff" />
<rect x="1658" y="420" width="240" height="1" fill="#7a7a7a" />
<rect x="1658" y="446" width="240" height="1" fill="#7a7a7a" />
<rect x="1658" y="420" width="1" height="27" fill="#7a7a7a" />
<rect x="1897" y="420" width="1" height="27" fill="#7a7a7a" />
<text x="1661.5" y="440" font-family="Liberation Sans" font-size="17.9" fill="#000" text-anchor="start" >0.75</text>
<text x="1658.5" y="471" font-family="Liberation Sans" font-size="17.9" fill="#000" text-anchor="start" >Min Washed Bandwidth(MHz)</text>
<rect x="1658" y="482" width="240" height="27" fill="#ffffff" />
<rect x="1658" y="482" width="240" height="1" fill="#7a7a7a" />
<rect x="1658" y="508" width="240" height="1" fill="#7a7a7a" />
<rect x="1658" y="482" width="1" height="27" fill="#7a7a7a" />
<rect x="1897" y="482" width="1" height="27" fill="#7a7a7a" />
<text x="1661.5" y="502" font-family="Liberation Sans" font-size="17.9" fill="#000" text-anchor="start" >2.500000</text>
<text x="1658.5" y="533" font-family="Liberation Sans" font-size="17.9" fill="#000" text-anchor="start" >Max Washed Bandwidth(MHz)</text>
<rect x="1658" y="544" width="240" height="27" fill="#ffffff" />
<rect x="1658" y="544" width="240" height="1" fill="#7a7a7a" />
<rect x="1658" y="570" width="240" height="1" fill="#7a7a7a" />
<rect x="1658" y="544" width="1" height="27" fill="#7a7a7a" />
<rect x="1897" y="544" width="1" height="27" fill="#7a7a7a" />
<text x="1661.5" y="564" font-family="Liberation Sans" font-size="17.9" fill="#000" text-anchor="start" >30.000000</text>
<text x="1658.5" y="595" font-family="Liberation Sans" font-size="17.9" fill="#000" text-anchor="start" >Single Freq Bw(MHz)</text>
<rect x="1658" y="606" width="240" height="27" fill="#ffffff" />
<rect x="1658" y="606" width="240" height="1" fill="#7a7a7a" />
<rect x="1658" y="632" width="240" height="1" fill="#7a7a7a" />
<rect x="1658" y="606" width="1" height="27" fill="#7a7a7a" />
<rect x="1897" y="606" width="1" height="27" fill="#7a7a7a" />
<text x="1661.5" y="626" font-family="Liberation Sans" font-size="17.9" fill="#000" text-anchor="start" >0.1</text>
<text x="1658.5" y="657" font-family="Liberation Sans" font-size="17.9" fill="#000" text-anchor="start" >Radar Backgroud Color</text>
<rect x="1659" y="669" width="238" height="28" fill="#e1e1e1" />
<rect x="1659" y="669" width="238" height="1" fill="#adadad" />
<rect x="1659" y="696" width="238" height="1" fill="#adadad" />
<rect x="1659" y="669" width="1" height="28" fill="#adadad" />
<rect x="1896" y="669" width="1" height="28" fill="#adadad" />
<text x="1778" y="690" font-family="Liberation Sans" font-size="17.9" fill="#000" text-anchor="middle" >Select Color</text>
<text x="1658.5" y="722" font-family="Liberation Sans" font-size="17.9" fill="#000" text-anchor="start" >Auto Interference</text>
<rect x="1658" y="733" width="16" height="16" fill="#ffffff" />
<rect x="1658" y="733" width="16" height="1" fill="#333333" />
<rect x="1658" y="748" width="16" height="1" fill="#333333" />
<rect x="1658" y="733" width="1" height="16" fill="#333333" />
<rect x="1673" y="733" width="1" height="16" fill="#333333" />
<path d="M1661 741 L1664.5 744.5 L1671 737.5" fill="none" stroke="#333" stroke-width="1.6"/>
<text x="1658.5" y="773" font-family="Liberation Sans" font-size="17.9" fill="#000" text-anchor="start" >Interference Seconds</text>
<rect x="1658" y="784" width="240" height="27" fill="#f0f0f0" />
<rect x="1658" y="784" width="240" height="1" fill="#cccccc" />
<rect x="1658" y="810" width="240" height="1" fill="#cccccc" />
<rect x="1658" y="784" width="1" height="27" fill="#cccccc" />
<rect x="1897" y="784" width="1" height="27" fill="#cccccc" />
<text x="1661.5" y="804" font-family="Liberation Sans" font-size="17.9" fill="#838383" text-anchor="start" >5</text>
<rect x="1788.5" y="846.5" width="10" height="5" rx="2.5" fill="#ff0000" fill-opacity="1.00" transform="rotate(150 1778 849)"/>
<rect x="1788.5" y="846.5" width="10" height="5" rx="2.5" fill="#ff0000" fill-opacity="0.92" transform="rotate(120 1778 849)"/>
<rect x="1788.5" y="846.5" width="10" height="5" rx="2.5" fill="#ff0000" fill-opacity="0.83" transform="rotate(90 1778 849)"/>
<rect x="1788.5" y="846.5" width="10" height="5" rx="2.5" fill="#ff0000" fill-opacity="0.74" transform="rotate(60 1778 849)"/>
<rect x="1788.5" y="846.5" width="10" height="5" rx="2.5" fill="#ff0000" fill-opacity="0.66" transform="rotate(30 1778 849)"/>
<rect x="1788.5" y="846.5" width="10" height="5" rx="2.5" fill="#ff0000" fill-opacity="0.57" transform="rotate(0 1778 849)"/>
<rect x="1788.5" y="846.5" width="10" height="5" rx="2.5" fill="#ff0000" fill-opacity="0.49" transform="rotate(-30 1778 849)"/>
<rect x="1788.5" y="846.5" width="10" height="5" rx="2.5" fill="#ff0000" fill-opacity="0.40" transform="rotate(-60 1778 849)"/>
<rect x="1788.5" y="846.5" width="10" height="5" rx="2.5" fill="#ff0000" fill-opacity="0.32" transform="rotate(-90 1778 849)"/>
<rect x="1788.5" y="846.5" width="10" height="5" rx="2.5" fill="#ff0000" fill-opacity="0.23" transform="rotate(-120 1778 849)"/>
<rect x="1788.5" y="846.5" width="10" height="5" rx="2.5" fill="#ff0000" fill-opacity="0.16" transform="rotate(-150 1778 849)"/>
<rect x="1788.5" y="846.5" width="10" height="5" rx="2.5" fill="#ff0000" fill-opacity="0.16" transform="rotate(-180 1778 849)"/>
<text x="1778" y="896" font-family="Liberation Sans" font-size="17.9" fill="#000" text-anchor="middle" >Interfering...</text>
<rect x="11" y="739" width="7" height="1" fill="#dcdcdc" />
<rect x="144" y="739" width="238" height="1" fill="#dcdcdc" />
<rect x="11" y="739" width="1" height="254" fill="#dcdcdc" />
<rect x="381" y="739" width="1" height="254" fill="#dcdcdc" />
<rect x="11" y="992" width="371" height="1" fill="#dcdcdc" />
<text x="21" y="746" font-family="Liberation Sans" font-size="17.9" fill="#000" text-anchor="start" >Washed Signal</text>
<rect x="12" y="751" width="369" height="242" fill="#ffffff" />
<rect x="12" y="751" width="369" height="1" fill="#828790" />
<rect x="12" y="992" width="369" height="1" fill="#828790" />
<rect x="12" y="751" width="1" height="242" fill="#828790" />
<rect x="380" y="751" width="1" height="242" fill="#828790" />
<clipPath id="t1"><rect x="13" y="752" width="346" height="219"/></clipPath>
<g clip-path="url(#t1)">
<rect x="40" y="752" width="1" height="242" fill="#d9d9d9" />
<clipPath id="t1h41"><rect x="41" y="751" width="124" height="40"/></clipPath>
<text x="46.5" y="773" font-family="Liberation Sans" font-size="16" fill="#000" text-anchor="start" clip-path="url(#t1h41)">Frequency(MHz</text>
<rect x="165" y="752" width="1" height="242" fill="#d9d9d9" />
<clipPath id="t1h166"><rect x="166" y="751" width="124" height="40"/></clipPath>
<text x="171.5" y="773" font-family="Liberation Sans" font-size="16" fill="#000" text-anchor="start" clip-path="url(#t1h166)">Bandwidth(MHz</text>
<rect x="290" y="752" width="1" height="242" fill="#d9d9d9" />
<clipPath id="t1h291"><rect x="291" y="751" width="124" height="40"/></clipPath>
<text x="296.5" y="773" font-family="Liberation Sans" font-size="16" fill="#000" text-anchor="start" clip-path="url(#t1h291)">Total Time</text>
<rect x="415" y="752" width="1" height="242" fill="#d9d9d9" />
<text x="18.5" y="805" font-family="Liberation Sans" font-size="16" fill="#000" text-anchor="start" >1</text>
<rect x="41" y="817" width="375" height="1" fill="#d9d9d9" />
<text x="44.5" y="805" font-family="Liberation Sans" font-size="16" fill="#000" text-anchor="start" >61.7036</text>
<text x="169.5" y="805" font-family="Liberation Sans" font-size="16" fill="#000" text-anchor="start" >8.8196</text>
<text x="294.5" y="805" font-family="Liberation Sans" font-size="16" fill="#000" text-anchor="start" >10</text>
<text x="18.5" y="842" font-family="Liberation Sans" font-size="16" fill="#000" text-anchor="start" >2</text>
<rect x="41" y="854" width="375" height="1" fill="#d9d9d9" />
<text x="44.5" y="842" font-family="Liberation Sans" font-size="16" fill="#000" text-anchor="start" >98.7721</text>
<text x="169.5" y="842" font-family="Liberation Sans" font-size="16" fill="#000" text-anchor="start" >22.64</text>
<text x="294.5" y="842" font-family="Liberation Sans" font-size="16" fill="#000" text-anchor="start" >10</text>
<text x="18.5" y="879" font-family="Liberation Sans" font-size="16" fill="#000" text-anchor="start" >3</text>
<rect x="41" y="891" width="375" height="1" fill="#d9d9d9" />
<text x="44.5" y="879" font-family="Liberation Sans" font-size="16" fill="#000" text-anchor="start" >154.3</text>
<text x="169.5" y="879" font-family="Liberation Sans" font-size="16" fill="#000" text-anchor="start" >18.123</text>
<text x="294.5" y="879" font-family="Liberation Sans" font-size="16" fill="#000" text-anchor="start" >10</text>
<text x="18.5" y="916" font-family="Liberation Sans" font-size="16" fill="#000" text-anchor="start" >4</text>
<rect x="41" y="928" width="375" height="1" fill="#d9d9d9" />
<text x="44.5" y="916" font-family="Liberation Sans" font-size="16" fill="#000" text-anchor="start" >169.063</text>
<text x="169.5" y="916" font-family="Liberation Sans" font-size="16" fill="#000" text-anchor="start" >4.52344</text>
<text x="294.5" y="916" font-family="Liberation Sans" font-size="16" fill="#000" text-anchor="start" >10</text>
<text x="18.5" y="953" font-family="Liberation Sans" font-size="16" fill="#000" text-anchor="start" >5</text>
<rect x="41" y="965" width="375" height="1" fill="#d9d9d9" />
<text x="44.5" y="953" font-family="Liberation Sans" font-size="16" fill="#000" text-anchor="start" >178.613</text>
<text x="169.5" y="953" font-family="Liberation Sans" font-size="16" fill="#000" text-anchor="start" >3.96387</text>
<text x="294.5" y="953" font-family="Liberation Sans" font-size="16" fill="#000" text-anchor="start" >10</text>
<text x="18.5" y="990" font-family="Liberation Sans" font-size="16" fill="#000" text-anchor="start" >6</text>
<rect x="41" y="1002" width="375" height="1" fill="#d9d9d9" />
<text x="44.5" y="990" font-family="Liberation Sans" font-size="16" fill="#000" text-anchor="start" ></text>
<text x="169.5" y="990" font-family="Liberation Sans" font-size="16" fill="#000" text-anchor="start" ></text>
<text x="294.5" y="990" font-family="Liberation Sans" font-size="16" fill="#000" text-anchor="start" ></text>
</g>
<rect x="360" y="752" width="20" height="219" fill="#f0f0f0" />
<path d="M365.5 765.5 L370.0 760.5 L374.5 765.5" fill="none" stroke="#606060" stroke-width="2"/>
<path d="M365.5 957.5 L370.0 962.5 L374.5 957.5" fill="none" stroke="#606060" stroke-width="2"/>
<rect x="361" y="773" width="18" height="21" fill="#cdcdcd" />
<rect x="13" y="971" width="346" height="21" fill="#f0f0f0" />
<path d="M26.5 977.0 L21.5 981.5 L26.5 986.0" fill="none" stroke="#606060" stroke-width="2"/>
<path d="M345.5 977.0 L350.5 981.5 L345.5 986.0" fill="none" stroke="#606060" stroke-width="2"/>
<rect x="34" y="972" width="121" height="19" fill="#cdcdcd" />
<rect x="360" y="971" width="20" height="21" fill="#f0f0f0" />
<rect x="387" y="739" width="7" height="1" fill="#dcdcdc" />
<rect x="468" y="739" width="185" height="1" fill="#dcdcdc" />
<rect x="387" y="739" width="1" height="254" fill="#dcdcdc" />
<rect x="652" y="739" width="1" height="254" fill="#dcdcdc" />
<rect x="387" y="992" width="266" height="1" fill="#dcdcdc" />
<text x="397" y="746" font-family="Liberation Sans" font-size="17.9" fill="#000" text-anchor="start" >Whitelist</text>
<rect x="388" y="751" width="264" height="242" fill="#ffffff" />
<rect x="388" y="751" width="264" height="1" fill="#828790" />
<rect x="388" y="992" width="264" height="1" fill="#828790" />
<rect x="388" y="751" width="1" height="242" fill="#828790" />
<rect x="651" y="751" width="1" height="242" fill="#828790" />
<clipPath id="t2"><rect x="389" y="752" width="262" height="240"/></clipPath>
<g clip-path="url(#t2)">
<clipPath id="t2h389"><rect x="389" y="751" width="124" height="40"/></clipPath>
<text x="394.5" y="773" font-family="Liberation Sans" font-size="16" fill="#000" text-anchor="start" clip-path="url(#t2h389)">Freq Start(MHz)</text>
<rect x="513" y="752" width="1" height="29" fill="#e0e0e0" />
<clipPath id="t2h514"><rect x="514" y="751" width="124" height="40"/></clipPath>
<text x="519.5" y="773" font-family="Liberation Sans" font-size="16" fill="#000" text-anchor="start" clip-path="url(#t2h514)">Freq Stop(MHz)</text>
</g>
<rect x="658" y="739" width="7" height="1" fill="#dcdcdc" />
<rect x="848" y="739" width="111" height="1" fill="#dcdcdc" />
<rect x="658" y="739" width="1" height="254" fill="#dcdcdc" />
<rect x="958" y="739" width="1" height="254" fill="#dcdcdc" />
<rect x="658" y="992" width="301" height="1" fill="#dcdcdc" />
<text x="668" y="746" font-family="Liberation Sans" font-size="17.9" fill="#000" text-anchor="start" >Auto Interfering Signal</text>
<rect x="659" y="751" width="299" height="242" fill="#ffffff" />
<rect x="659" y="751" width="299" height="1" fill="#828790" />
<rect x="659" y="992" width="299" height="1" fill="#828790" />
<rect x="659" y="751" width="1" height="242" fill="#828790" />
<rect x="957" y="751" width="1" height="242" fill="#828790" />
<clipPath id="t3"><rect x="660" y="752" width="276" height="219"/></clipPath>
<g clip-path="url(#t3)">
<rect x="687" y="752" width="1" height="242" fill="#d9d9d9" />
<clipPath id="t3h688"><rect x="688" y="751" width="124" height="40"/></clipPath>
<text x="693.5" y="773" font-family="Liberation Sans" font-size="16" fill="#000" text-anchor="start" clip-path="url(#t3h688)">Frequency(MHz</text>
<rect x="812" y="752" width="1" height="242" fill="#d9d9d9" />
<clipPath id="t3h813"><rect x="813" y="751" width="124" height="40"/></clipPath>
<text x="818.5" y="773" font-family="Liberation Sans" font-size="16" fill="#000" text-anchor="start" clip-path="url(#t3h813)">Bandwidth(MHz</text>
<rect x="937" y="752" width="1" height="242" fill="#d9d9d9" />
<text x="665.5" y="805" font-family="Liberation Sans" font-size="16" fill="#000" text-anchor="start" >1</text>
<rect x="688" y="817" width="250" height="1" fill="#d9d9d9" />
<text x="691.5" y="805" font-family="Liberation Sans" font-size="16" fill="#000" text-anchor="start" >61.7036</text>
<text x="816.5" y="805" font-family="Liberation Sans" font-size="16" fill="#000" text-anchor="start" >8.8196</text>
<text x="665.5" y="842" font-family="Liberation Sans" font-size="16" fill="#000" text-anchor="start" >2</text>
<rect x="688" y="854" width="250" height="1" fill="#d9d9d9" />
<text x="691.5" y="842" font-family="Liberation Sans" font-size="16" fill="#000" text-anchor="start" >98.7721</text>
<text x="816.5" y="842" font-family="Liberation Sans" font-size="16" fill="#000" text-anchor="start" >22.64</text>
<text x="665.5" y="879" font-family="Liberation Sans" font-size="16" fill="#000" text-anchor="start" >3</text>
<rect x="688" y="891" width="250" height="1" fill="#d9d9d9" />
<text x="691.5" y="879" font-family="Liberation Sans" font-size="16" fill="#000" text-anchor="start" >773.114</text>
<text x="816.5" y="879" font-family="Liberation Sans" font-size="16" fill="#000" text-anchor="start" >29.188</text>
<text x="665.5" y="916" font-family="Liberation Sans" font-size="16" fill="#000" text-anchor="start" >4</text>
<rect x="688" y="928" width="250" height="1" fill="#d9d9d9" />
<text x="691.5" y="916" font-family="Liberation Sans" font-size="16" fill="#000" text-anchor="start" >874.833</text>
<text x="816.5" y="916" font-family="Liberation Sans" font-size="16" fill="#000" text-anchor="start" >10.3601</text>
<text x="665.5" y="953" font-family="Liberation Sans" font-size="16" fill="#000" text-anchor="start" >5</text>
<rect x="688" y="965" width="250" height="1" fill="#d9d9d9" />
<text x="691.5" y="953" font-family="Liberation Sans" font-size="16" fill="#000" text-anchor="start" >947.32</text>
<text x="816.5" y="953" font-family="Liberation Sans" font-size="16" fill="#000" text-anchor="start" >25.8021</text>
<text x="665.5" y="990" font-family="Liberation Sans" font-size="16" fill="#000" text-anchor="start" >6</text>
<rect x="688" y="1002" width="250" height="1" fill="#d9d9d9" />
<text x="691.5" y="990" font-family="Liberation Sans" font-size="16" fill="#000" text-anchor="start" ></text>
<text x="816.5" y="990" font-family="Liberation Sans" font-size="16" fill="#000" text-anchor="start" ></text>
</g>
<rect x="937" y="752" width="20" height="219" fill="#f0f0f0" />
<path d="M942.5 765.5 L947.0 760.5 L951.5 765.5" fill="none" stroke="#606060" stroke-width="2"/>
<path d="M942.5 957.5 L947.0 962.5 L951.5 957.5" fill="none" stroke="#606060" stroke-width="2"/>
<rect x="938" y="773" width="18" height="87" fill="#cdcdcd" />
<rect x="660" y="971" width="276" height="21" fill="#f0f0f0" />
<path d="M673.5 977.0 L668.5 981.5 L673.5 986.0" fill="none" stroke="#606060" stroke-width="2"/>
<path d="M922.5 977.0 L927.5 981.5 L922.5 986.0" fill="none" stroke="#606060" stroke-width="2"/>
<rect x="681" y="972" width="46" height="19" fill="#cdcdcd" />
<rect x="937" y="971" width="20" height="21" fill="#f0f0f0" />
<rect x="964" y="739" width="7" height="1" fill="#dcdcdc" />
<rect x="1174" y="739" width="70" height="1" fill="#dcdcdc" />
<rect x="964" y="739" width="1" height="254" fill="#dcdcdc" />
<rect x="1243" y="739" width="1" height="254" fill="#dcdcdc" />
<rect x="964" y="992" width="280" height="1" fill="#dcdcdc" />
<text x="974" y="746" font-family="Liberation Sans" font-size="17.9" fill="#000" text-anchor="start" >Manual Interfering Signal</text>
<rect x="965" y="751" width="278" height="242" fill="#ffffff" />
<rect x="965" y="751" width="278" height="1" fill="#828790" />
<rect x="965" y="992" width="278" height="1" fill="#828790" />
<rect x="965" y="751" width="1" height="242" fill="#828790" />
<rect x="1242" y="751" width="1" height="242" fill="#828790" />
<clipPath id="t4"><rect x="966" y="752" width="276" height="240"/></clipPath>
<g clip-path="url(#t4)">
<clipPath id="t4h966"><rect x="966" y="751" width="124" height="40"/></clipPath>
<text x="971.5" y="773" font-family="Liberation Sans" font-size="16" fill="#000" text-anchor="start" clip-path="url(#t4h966)">Freq Start(MHz)</text>
<rect x="1090" y="752" width="1" height="29" fill="#e0e0e0" />
<clipPath id="t4h1091"><rect x="1091" y="751" width="124" height="40"/></clipPath>
<text x="1096.5" y="773" font-family="Liberation Sans" font-size="16" fill="#000" text-anchor="start" clip-path="url(#t4h1091)">Freq Stop(MHz)</text>
</g>
<rect x="1250" y="739" width="7" height="1" fill="#dcdcdc" />
<rect x="1491" y="739" width="129" height="1" fill="#dcdcdc" />
<rect x="1250" y="739" width="1" height="254" fill="#dcdcdc" />
<rect x="1619" y="739" width="1" height="254" fill="#dcdcdc" />
<rect x="1250" y="992" width="370" height="1" fill="#dcdcdc" />
<text x="1260" y="746" font-family="Liberation Sans" font-size="17.9" fill="#000" text-anchor="start" >GPIO Frequency Band(MHz)</text>
<rect x="1251" y="751" width="368" height="242" fill="#ffffff" />
<rect x="1251" y="751" width="368" height="1" fill="#828790" />
<rect x="1251" y="992" width="368" height="1" fill="#828790" />
<rect x="1251" y="751" width="1" height="242" fill="#828790" />
<rect x="1618" y="751" width="1" height="242" fill="#828790" />
<clipPath id="gp"><rect x="1252" y="752" width="346" height="220"/></clipPath><g clip-path="url(#gp)">
<rect x="1301" y="906" width="296" height="22" fill="#d9d9d9" />
<rect x="1276" y="752" width="100" height="22" fill="#ff0000" />
<text x="1279.5" y="769" font-family="Liberation Sans" font-size="16" fill="#000" text-anchor="start" textLength="49" lengthAdjust="spacingAndGlyphs">GPIO 0</text>
<path d="M1257.5 760.5 L1262.5 765.5 L1267.5 760.5" fill="none" stroke="#404040" stroke-width="1.9"/>
<text x="1379.5" y="791" font-family="Liberation Sans" font-size="16" fill="#000" text-anchor="start" >500</text>
<text x="1504" y="791" font-family="Liberation Sans" font-size="16" fill="#000" text-anchor="start" >1000</text>
<text x="1279.5" y="813" font-family="Liberation Sans" font-size="16" fill="#000" text-anchor="start" textLength="49" lengthAdjust="spacingAndGlyphs">GPIO 1</text>
<path d="M1257.5 804.5 L1262.5 809.5 L1267.5 804.5" fill="none" stroke="#404040" stroke-width="1.9"/>
<text x="1379.5" y="835" font-family="Liberation Sans" font-size="16" fill="#000" text-anchor="start" >1000</text>
<text x="1504" y="835" font-family="Liberation Sans" font-size="16" fill="#000" text-anchor="start" >1600</text>
<rect x="1276" y="840" width="100" height="22" fill="#ff0000" />
<text x="1279.5" y="857" font-family="Liberation Sans" font-size="16" fill="#000" text-anchor="start" textLength="49" lengthAdjust="spacingAndGlyphs">GPIO 2</text>
<path d="M1257.5 848.5 L1262.5 853.5 L1267.5 848.5" fill="none" stroke="#404040" stroke-width="1.9"/>
<text x="1379.5" y="879" font-family="Liberation Sans" font-size="16" fill="#000" text-anchor="start" >1800</text>
<text x="1504" y="879" font-family="Liberation Sans" font-size="16" fill="#000" text-anchor="start" >2000</text>
<rect x="1276" y="884" width="100" height="22" fill="#ff0000" />
<text x="1279.5" y="901" font-family="Liberation Sans" font-size="16" fill="#000" text-anchor="start" textLength="49" lengthAdjust="spacingAndGlyphs">GPIO 3</text>
<path d="M1257.5 892.5 L1262.5 897.5 L1267.5 892.5" fill="none" stroke="#404040" stroke-width="1.9"/>
<text x="1379.5" y="923" font-family="Liberation Sans" font-size="16" fill="#000" text-anchor="start" >2000</text>
<text x="1504" y="923" font-family="Liberation Sans" font-size="16" fill="#000" text-anchor="start" >3000</text>
<text x="1279.5" y="945" font-family="Liberation Sans" font-size="16" fill="#000" text-anchor="start" textLength="49" lengthAdjust="spacingAndGlyphs">GPIO 4</text>
<text x="1279.5" y="967" font-family="Liberation Sans" font-size="16" fill="#000" text-anchor="start" textLength="49" lengthAdjust="spacingAndGlyphs">GPIO 5</text>
</g>
<rect x="1598" y="752" width="20" height="220" fill="#f0f0f0" />
<path d="M1603.5 765.5 L1608.0 760.5 L1612.5 765.5" fill="none" stroke="#606060" stroke-width="2"/>
<path d="M1603.5 958.5 L1608.0 963.5 L1612.5 958.5" fill="none" stroke="#606060" stroke-width="2"/>
<rect x="1599" y="773" width="18" height="159" fill="#cdcdcd" />
<rect x="1252" y="972" width="346" height="20" fill="#f0f0f0" />
<path d="M1265.5 977.5 L1260.5 982.0 L1265.5 986.5" fill="none" stroke="#606060" stroke-width="2"/>
<path d="M1584.5 977.5 L1589.5 982.0 L1584.5 986.5" fill="none" stroke="#606060" stroke-width="2"/>
<rect x="1272" y="973" width="280" height="18" fill="#cdcdcd" />
<rect x="1598" y="972" width="20" height="20" fill="#f0f0f0" /></svg></body></html>
